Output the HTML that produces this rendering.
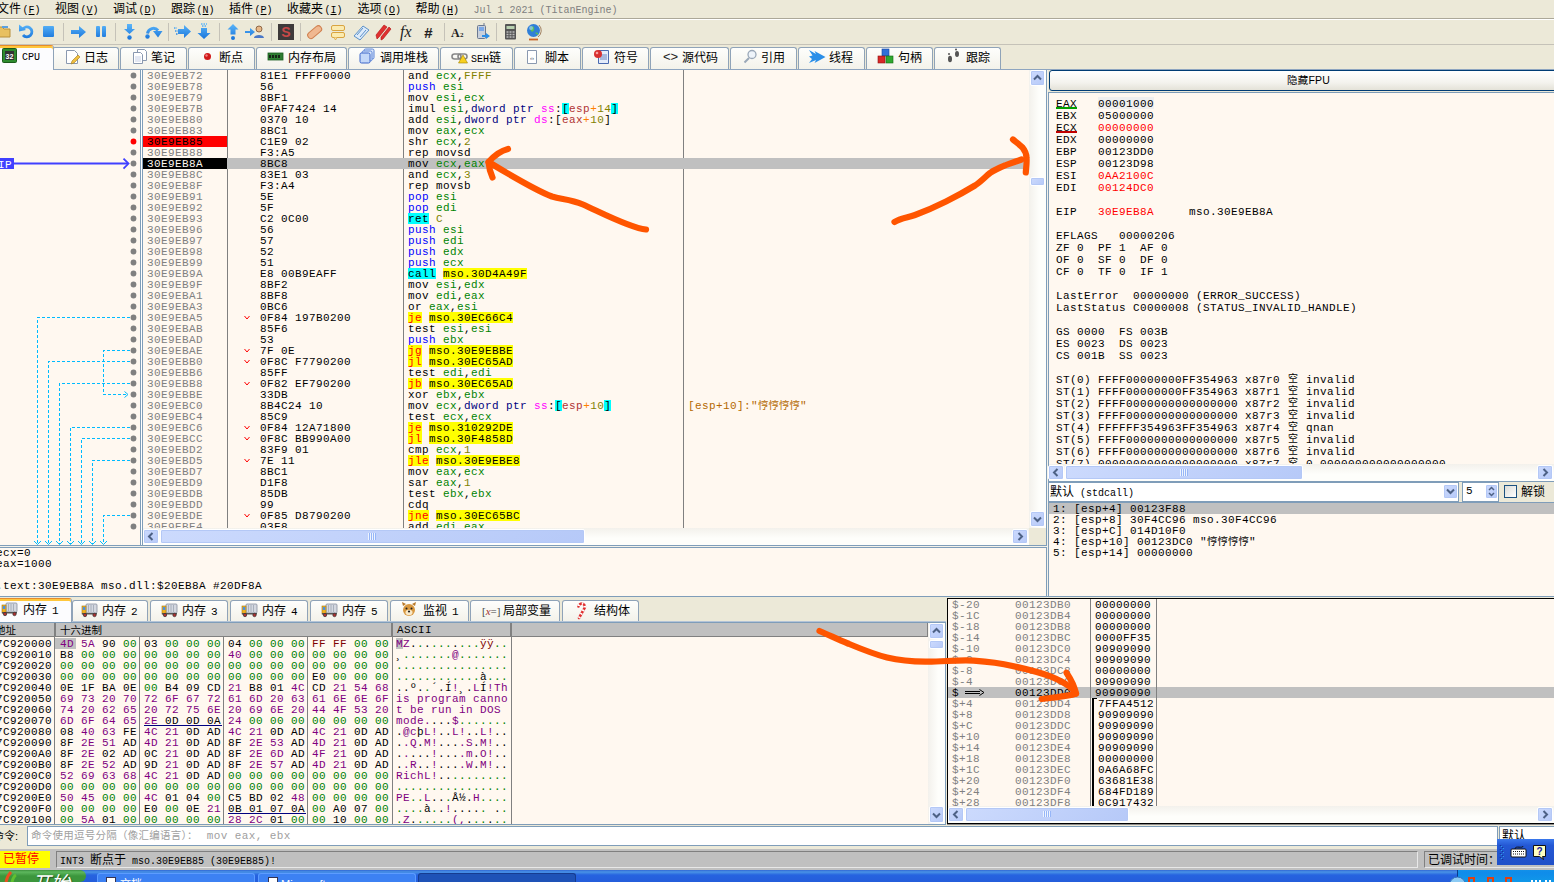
<!DOCTYPE html><html lang="zh-CN"><head><meta charset="utf-8"><title>x32dbg</title><style>
*{box-sizing:border-box;margin:0;padding:0}
html,body{width:1554px;height:882px;overflow:hidden;background:#ECE9D8}
body{position:relative;font-family:"Liberation Sans","Noto Sans CJK SC",sans-serif;font-size:12px;color:#000}
.a{position:absolute}
.m{font-family:"Liberation Mono","Noto Sans CJK SC",monospace;font-size:11px;letter-spacing:0.4px;white-space:pre;line-height:11px}
.ui{font-family:"Liberation Sans","Noto Sans CJK SC",sans-serif;font-size:12px;white-space:pre}
.l{font-family:"Liberation Mono","Noto Sans CJK SC",monospace;font-size:10px;letter-spacing:0}
.r{position:absolute;height:11px;white-space:pre;line-height:13px}
.r span{display:inline-block;height:11px;vertical-align:top}
.g{color:#808080}
.rg{color:#008300}.cn{color:#828200}.bl{color:#0000FF}.nv{color:#000080}.sg{color:#FF00FF}
.br{color:#B03434}.pl{color:#FF8000}
.cy{background:#00FFFF}.ye{background:#FFFF00}.jr{background:#FFFF00;color:#FF0000}
.cm{color:#B46800}
.tab{position:absolute;top:47px;height:22px;border:1px solid #8FA3B8;border-bottom:none;border-radius:3px 3px 0 0;background:linear-gradient(#FEFEFC,#F3F2EA)}
.tab.on{top:45px;height:25px;background:#FCFCFE;border-top:1px solid #E68B2C;box-shadow:inset 0 2px 0 #FFC73C;z-index:2}
.tl{position:absolute;white-space:pre;font-size:12px;line-height:14px}
.btn{position:absolute;background:linear-gradient(135deg,#CCDAFD,#B6C9F8);border:1px solid #FFF;border-radius:2px;box-shadow:inset 0 0 0 1px #B4C8F6}
.hd{position:absolute;background:#C0C0C0;height:14px}
</style></head><body>
<div class="a" style="left:0px;top:0px;width:1554px;height:18px;background:#ECE9D8"></div>
<div class="a" style="left:0px;top:18px;width:1554px;height:1px;background:#ACA899"></div>
<div class="a" style="left:0px;top:19px;width:1554px;height:1px;background:#FFFFFF"></div>
<div class="a ui" style="left:-3px;top:2px;line-height:15px;height:16px">文件<span class="l" style="margin-left:1.500px">(<u>F</u>)</span></div>
<div class="a ui" style="left:55px;top:2px;line-height:15px;height:16px">视图<span class="l" style="margin-left:1.500px">(<u>V</u>)</span></div>
<div class="a ui" style="left:113px;top:2px;line-height:15px;height:16px">调试<span class="l" style="margin-left:1.500px">(<u>D</u>)</span></div>
<div class="a ui" style="left:171px;top:2px;line-height:15px;height:16px">跟踪<span class="l" style="margin-left:1.500px">(<u>N</u>)</span></div>
<div class="a ui" style="left:229px;top:2px;line-height:15px;height:16px">插件<span class="l" style="margin-left:1.500px">(<u>P</u>)</span></div>
<div class="a ui" style="left:287px;top:2px;line-height:15px;height:16px">收藏夹<span class="l" style="margin-left:1.500px">(<u>I</u>)</span></div>
<div class="a ui" style="left:357.5px;top:2px;line-height:15px;height:16px">选项<span class="l" style="margin-left:1.500px">(<u>O</u>)</span></div>
<div class="a ui" style="left:415.5px;top:2px;line-height:15px;height:16px">帮助<span class="l" style="margin-left:1.500px">(<u>H</u>)</span></div>
<div class="a ui l" style="left:473.500px;top:3px;line-height:15px;color:#808080;font-size:10px">Jul 1 2021 (TitanEngine)</div>
<div class="a" style="left:0px;top:20px;width:1554px;height:24px;background:#ECE9D8"></div>
<div class="a" style="left:0px;top:44px;width:1554px;height:1px;background:#C5C2B8"></div>
<div class="a" style="left:63px;top:23px;width:1px;height:18px;background:#C5C2B8"></div>
<div class="a" style="left:115px;top:23px;width:1px;height:18px;background:#C5C2B8"></div>
<div class="a" style="left:168px;top:23px;width:1px;height:18px;background:#C5C2B8"></div>
<div class="a" style="left:219px;top:23px;width:1px;height:18px;background:#C5C2B8"></div>
<div class="a" style="left:271px;top:23px;width:1px;height:18px;background:#C5C2B8"></div>
<div class="a" style="left:300px;top:23px;width:1px;height:18px;background:#C5C2B8"></div>
<div class="a" style="left:444px;top:23px;width:1px;height:18px;background:#C5C2B8"></div>
<div class="a" style="left:496px;top:23px;width:1px;height:18px;background:#C5C2B8"></div>
<svg class="a" style="left:0px;top:20px;overflow:hidden" width="560" height="24" viewBox="0 20 560 24"><defs><linearGradient id="bg1" x1="0" y1="24" x2="0" y2="40" gradientUnits="userSpaceOnUse"><stop offset="0" stop-color="#5CB6FA"/><stop offset="1" stop-color="#1470D8"/></linearGradient></defs><path d="M-6 27h8l2 2h6v8h-16z" fill="#E8C060" stroke="#B8903A" stroke-width="1"/><rect x="2" y="26" width="6" height="2" fill="#5AA0E0"/><path d="M22.500 29.500a5 5 0 1 1 0.500 5.500" fill="none" stroke="url(#bg1)" stroke-width="2.800"/><path d="M19 24.500l0 7l7 -1.500z" fill="url(#bg1)"/><rect x="43" y="26" width="11" height="11" rx="1" fill="url(#bg1)"/><path d="M71 30h8v-4l7 6l-7 6v-4h-8z" fill="url(#bg1)"/><rect x="96" y="26" width="4" height="11" rx="1" fill="url(#bg1)"/><rect x="102" y="26" width="4" height="11" rx="1" fill="url(#bg1)"/><path d="M127 24h5v5h3l-5.500 5l-5.500 -5h3z" fill="url(#bg1)"/><circle cx="129.500" cy="37.500" r="2.200" fill="url(#bg1)"/><path d="M147.500 33.500a6 6 0 0 1 10.500 -3" fill="none" stroke="url(#bg1)" stroke-width="3"/><path d="M153 31h9.500l-4.500 6.500z" fill="url(#bg1)"/><circle cx="147.500" cy="36.500" r="2.200" fill="url(#bg1)"/><path d="M178 29h6v-4l7 6.500l-7 6.500v-4h-6z" fill="url(#bg1)"/><path d="M174 28h3M175 31h3M176 34h2" stroke="url(#bg1)" stroke-width="1.500" stroke-dasharray="1.500 1"/><path d="M201 28h6v5h3.500l-6.500 6l-6.500 -6h3.500z" fill="url(#bg1)"/><path d="M201 24h6M202 26h5" stroke="url(#bg1)" stroke-width="1.300" stroke-dasharray="1.500 1"/><path d="M233 24l5.500 5.500h-3v5h-5v-5h-3z" fill="url(#bg1)"/><circle cx="233" cy="38" r="2" fill="url(#bg1)"/><path d="M245 31h5v-3l5 4l-5 4v-3h-5z" fill="url(#bg1)"/><circle cx="259" cy="29" r="3" fill="#E8B888" stroke="#7A5030" stroke-width=".8"/><path d="M254 38c0-4 10-4 10 0z" fill="#4A78C8"/><rect x="278" y="24" width="16" height="16" fill="#3E3A3A"/><text x="286" y="37" font-family="Liberation Sans,sans-serif" font-weight="bold" font-size="14" fill="#C84848" text-anchor="middle">S</text><rect x="-8" y="-3" width="16" height="6.500" rx="3" transform="translate(314.500 32) rotate(-40)" fill="#F0B890" stroke="#D08050" stroke-width="1"/><rect x="331.500" y="25.500" width="13" height="5" rx="1.500" fill="#FBEBB0" stroke="#D9A441"/><rect x="331.500" y="32.500" width="13" height="5" rx="1.500" fill="#FBEBB0" stroke="#D9A441"/><path d="M334 37.500l1.500 2.500l1.500 -2.500" fill="#FBEBB0" stroke="#D9A441" stroke-width=".8"/><path d="M354 36l9 -10l6 4l-9 10z" fill="#DDEBFA" stroke="#5B90C8" stroke-width="1"/><path d="M357 35l6 -7M360 37l6 -7" stroke="#5B90C8" stroke-width="1"/><path d="M376 35l8 -10l3 2l-8 10l-2 2zM381 37l8 -10l2 2l-8 10l-2 1z" fill="#E03030" stroke="#B01010" stroke-width=".6"/><text x="400" y="37" font-family="Liberation Serif,serif" font-style="italic" font-size="16" fill="#222">fx</text><text x="424" y="38" font-family="Liberation Sans,sans-serif" font-style="italic" font-weight="bold" font-size="15" fill="#222">#</text><text x="451" y="37" font-family="Liberation Serif,serif" font-weight="bold" font-size="12" fill="#222">A</text><text x="460" y="37" font-family="Liberation Serif,serif" font-weight="bold" font-size="7" fill="#222">2</text><rect x="477.500" y="25.500" width="8" height="13" rx="1" fill="#C8D0DC" stroke="#6A7890" stroke-width="1"/><rect x="479" y="27" width="5" height="4" fill="#7AA8E8"/><path d="M482 35h4v-2l4 3l-4 3v-2h-4z" fill="#2B8FE8"/><path d="M484 25v-2" stroke="#6A7890"/><rect x="505" y="24" width="11" height="15.500" rx="1" fill="#555"/><rect x="506.500" y="26" width="8" height="3" fill="#B8D0B0"/><path d="M506.500 32h8M506.500 34.500h8M506.500 37h8" stroke="#BBB" stroke-width="1.500" stroke-dasharray="2 1"/><circle cx="533.500" cy="30.500" r="6.500" fill="#2F7FD8"/><path d="M530 27c3-2 5 0 4 3s-4 2-4-3zM535 33c2-1 4 0 3 2z" fill="#5AC05A"/><path d="M529 39.500h9" stroke="#C86428" stroke-width="1.800"/><circle cx="531" cy="28" r="2" fill="#9CCBFA" opacity=".7"/><path d="M539 25a8 8 0 0 1 -1 12" fill="none" stroke="#A08060" stroke-width="1"/></svg>
<div class="a" style="left:0px;top:45px;width:1554px;height:25px;background:#ECE9D8"></div>
<div class="a" style="left:0px;top:69px;width:1554px;height:1px;background:#8EA5C0"></div>
<div class="tab" style="left:52px;width:67px"><div class="tl" style="left:31px;top:3px">日志</div></div>
<div class="tab" style="left:120px;width:67px"><div class="tl" style="left:30px;top:3px">笔记</div></div>
<div class="tab" style="left:188px;width:67px"><div class="tl" style="left:30px;top:3px">断点</div></div>
<div class="tab" style="left:256px;width:91px"><div class="tl" style="left:31px;top:3px">内存布局</div></div>
<div class="tab" style="left:348px;width:91px"><div class="tl" style="left:31px;top:3px">调用堆栈</div></div>
<div class="tab" style="left:440px;width:73px"><div class="tl" style="left:30px;top:3px"><span class="l" style="font-size:10px">SEH</span>链</div></div>
<div class="tab" style="left:514px;width:67px"><div class="tl" style="left:30px;top:3px">脚本</div></div>
<div class="tab" style="left:582px;width:67px"><div class="tl" style="left:31px;top:3px">符号</div></div>
<div class="tab" style="left:650px;width:79px"><div class="tl" style="left:31px;top:3px">源代码</div></div>
<div class="tab" style="left:730px;width:67px"><div class="tl" style="left:30px;top:3px">引用</div></div>
<div class="tab" style="left:798px;width:67px"><div class="tl" style="left:30px;top:3px">线程</div></div>
<div class="tab" style="left:866px;width:67px"><div class="tl" style="left:31px;top:3px">句柄</div></div>
<div class="tab" style="left:934px;width:67px"><div class="tl" style="left:31px;top:3px">跟踪</div></div>
<div class="tab on" style="left:-2px;width:56px"><div class="tl" style="left:23px;top:3px"><span class="l" style="font-size:10px">CPU</span></div></div>
<svg class="a" style="left:0px;top:45px;z-index:3" width="1000" height="25" viewBox="0 45 1000 25"><rect x="2.500" y="48.500" width="14" height="14" rx="1" fill="#2E8B2E" stroke="#1A5A1A"/><rect x="5" y="51" width="9" height="9" fill="#333"/><text x="9.500" y="58.500" font-size="7" font-family="Liberation Sans,sans-serif" font-weight="bold" fill="#FFF" text-anchor="middle">32</text><path d="M66.500 50.500h8l3 3v10h-11z" fill="#FFF" stroke="#8A99B0"/><path d="M71 64l1 -3l6 -6l2 2l-6 6z" fill="#F0C040" stroke="#A07820" stroke-width=".6"/><path d="M137.500 49.500h7l2 2v9h-9z" fill="#FFF" stroke="#8A99B0"/><path d="M133.500 52.500h7l2 2v9h-9z" fill="#FFF" stroke="#8A99B0"/><path d="M135 57h6M135 59h6M135 61h6" stroke="#B8C4E0" stroke-width=".8"/><circle cx="207.500" cy="56.500" r="3.500" fill="#D01818"/><circle cx="206.500" cy="55.500" r="1.200" fill="#F08080"/><rect x="268" y="53" width="15" height="7" fill="#2E7D32" stroke="#1B5E20" stroke-width=".8"/><path d="M270 55v3M273 55v3M276 55v3M279 55v3" stroke="#111" stroke-width="1.600"/><rect x="364" y="49" width="10" height="10" rx="1.500" fill="#DCE8FA" stroke="#5B84D8"/><rect x="362" y="51" width="10" height="10" rx="1.500" fill="#DCE8FA" stroke="#5B84D8"/><rect x="360" y="53" width="10" height="10" rx="1.500" fill="#C4D8F8" stroke="#3B64C8"/><rect x="452" y="54" width="9" height="5" rx="2.500" fill="none" stroke="#888" stroke-width="1.600"/><rect x="458" y="54" width="9" height="5" rx="2.500" fill="none" stroke="#888" stroke-width="1.600"/><path d="M463 55l4.500 8h-9z" fill="#F8D020" stroke="#A08000" stroke-width=".6"/><path d="M527.500 50.500h9v13h-9z" fill="#FFF" stroke="#8A99B0"/><text x="532" y="60" font-size="6" font-family="Liberation Sans,sans-serif" fill="#345" text-anchor="middle">‹›</text><path d="M598.500 50.500h10v13h-10z" fill="#E4ECFA" stroke="#4A6AB0"/><path d="M600 55h7M600 57h7M600 59h7" stroke="#4A6AB0" stroke-width=".8"/><circle cx="598" cy="54" r="4" fill="#D83030"/><circle cx="597" cy="53" r="1.300" fill="#F8A0A0"/><text x="663" y="61" font-size="13" font-family="Liberation Sans,sans-serif" fill="#222">&lt;&gt;</text><circle cx="752" cy="54.500" r="4" fill="#EEF4FA" stroke="#9AA8B8" stroke-width="1.300"/><path d="M749 58l-4.500 4.500" stroke="#9AA8B8" stroke-width="2"/><path d="M809 50l7 4l-1.500 -3l11 6l-11 6l1.500 -3l-7 3l3 -4l-3 -2.500l3.500 -1z" fill="#2B8FE8"/><rect x="882" y="49" width="7" height="7" fill="#3070D8" stroke="#1848A0" stroke-width=".6"/><rect x="878" y="56" width="7" height="7" fill="#D82828" stroke="#901010" stroke-width=".6"/><rect x="886" y="56" width="7" height="7" fill="#30A830" stroke="#106810" stroke-width=".6"/><ellipse cx="950" cy="59" rx="2" ry="3.200" fill="#555"/><ellipse cx="957" cy="54" rx="2" ry="3" fill="#555"/><circle cx="949" cy="54" r="1" fill="#555"/><circle cx="956" cy="49.500" r="1" fill="#555"/></svg>
<div class="a" style="left:0px;top:70px;width:1046px;height:475px;background:#FFF8F0"></div>
<div class="a" style="left:140px;top:70px;width:1px;height:475px;background:#7F9DB9"></div>
<div class="a" style="left:141px;top:70px;width:1px;height:475px;background:#FFFFFF"></div>
<div class="a" style="left:142px;top:70px;width:1px;height:475px;background:#7F9DB9"></div>
<div class="a" style="left:227px;top:70px;width:1px;height:458px;background:#808080"></div>
<div class="a" style="left:403px;top:70px;width:1px;height:458px;background:#808080"></div>
<div class="a" style="left:683px;top:70px;width:1px;height:458px;background:#808080"></div>
<div class="a" style="left:143px;top:158px;width:886px;height:11px;background:#C0C0C0"></div>
<div class="a m" style="left:0;top:70px;width:1029px;height:458px;overflow:hidden"><div class="r" style="left:143px;top:0px;width:84px;padding-left:4px;"><span class="g">30E9EB72</span></div><div class="r" style="left:260px;top:0px">81E1 FFFF0000</div><div class="r" style="left:408px;top:0px">and <span class="rg">ecx</span>,<span class="cn">FFFF</span></div><div class="r" style="left:143px;top:11px;width:84px;padding-left:4px;"><span class="g">30E9EB78</span></div><div class="r" style="left:260px;top:11px">56</div><div class="r" style="left:408px;top:11px"><span class="bl">push </span><span class="rg">esi</span></div><div class="r" style="left:143px;top:22px;width:84px;padding-left:4px;"><span class="g">30E9EB79</span></div><div class="r" style="left:260px;top:22px">8BF1</div><div class="r" style="left:408px;top:22px">mov <span class="rg">esi</span>,<span class="rg">ecx</span></div><div class="r" style="left:143px;top:33px;width:84px;padding-left:4px;"><span class="g">30E9EB7B</span></div><div class="r" style="left:260px;top:33px">0FAF7424 14</div><div class="r" style="left:408px;top:33px">imul <span class="rg">esi</span>,<span class="nv">dword ptr </span><span class="sg">ss</span>:<span class="cy">[</span><span class="br">esp</span><span class="pl">+</span><span class="cn">14</span><span class="cy">]</span></div><div class="r" style="left:143px;top:44px;width:84px;padding-left:4px;"><span class="g">30E9EB80</span></div><div class="r" style="left:260px;top:44px">0370 10</div><div class="r" style="left:408px;top:44px">add <span class="rg">esi</span>,<span class="nv">dword ptr </span><span class="sg">ds</span>:[<span class="br">eax</span><span class="pl">+</span><span class="cn">10</span>]</div><div class="r" style="left:143px;top:55px;width:84px;padding-left:4px;"><span class="g">30E9EB83</span></div><div class="r" style="left:260px;top:55px">8BC1</div><div class="r" style="left:408px;top:55px">mov <span class="rg">eax</span>,<span class="rg">ecx</span></div><div class="r" style="left:143px;top:66px;width:84px;padding-left:4px;background:#FF0000;color:#000;"><span class="">30E9EB85</span></div><div class="r" style="left:260px;top:66px">C1E9 02</div><div class="r" style="left:408px;top:66px">shr <span class="rg">ecx</span>,<span class="cn">2</span></div><div class="r" style="left:143px;top:77px;width:84px;padding-left:4px;"><span class="g">30E9EB88</span></div><div class="r" style="left:260px;top:77px">F3:A5</div><div class="r" style="left:408px;top:77px">rep movsd</div><div class="r" style="left:143px;top:88px;width:84px;padding-left:4px;background:#000000;color:#FFF8F0;"><span class="">30E9EB8A</span></div><div class="r" style="left:260px;top:88px">8BC8</div><div class="r" style="left:408px;top:88px">mov <span class="rg">ecx</span>,<span class="rg">eax</span></div><div class="r" style="left:143px;top:99px;width:84px;padding-left:4px;"><span class="g">30E9EB8C</span></div><div class="r" style="left:260px;top:99px">83E1 03</div><div class="r" style="left:408px;top:99px">and <span class="rg">ecx</span>,<span class="cn">3</span></div><div class="r" style="left:143px;top:110px;width:84px;padding-left:4px;"><span class="g">30E9EB8F</span></div><div class="r" style="left:260px;top:110px">F3:A4</div><div class="r" style="left:408px;top:110px">rep movsb</div><div class="r" style="left:143px;top:121px;width:84px;padding-left:4px;"><span class="g">30E9EB91</span></div><div class="r" style="left:260px;top:121px">5E</div><div class="r" style="left:408px;top:121px"><span class="bl">pop </span><span class="rg">esi</span></div><div class="r" style="left:143px;top:132px;width:84px;padding-left:4px;"><span class="g">30E9EB92</span></div><div class="r" style="left:260px;top:132px">5F</div><div class="r" style="left:408px;top:132px"><span class="bl">pop </span><span class="rg">edi</span></div><div class="r" style="left:143px;top:143px;width:84px;padding-left:4px;"><span class="g">30E9EB93</span></div><div class="r" style="left:260px;top:143px">C2 0C00</div><div class="r" style="left:408px;top:143px"><span class="cy">ret</span> <span class="cn">C</span></div><div class="r" style="left:143px;top:154px;width:84px;padding-left:4px;"><span class="g">30E9EB96</span></div><div class="r" style="left:260px;top:154px">56</div><div class="r" style="left:408px;top:154px"><span class="bl">push </span><span class="rg">esi</span></div><div class="r" style="left:143px;top:165px;width:84px;padding-left:4px;"><span class="g">30E9EB97</span></div><div class="r" style="left:260px;top:165px">57</div><div class="r" style="left:408px;top:165px"><span class="bl">push </span><span class="rg">edi</span></div><div class="r" style="left:143px;top:176px;width:84px;padding-left:4px;"><span class="g">30E9EB98</span></div><div class="r" style="left:260px;top:176px">52</div><div class="r" style="left:408px;top:176px"><span class="bl">push </span><span class="rg">edx</span></div><div class="r" style="left:143px;top:187px;width:84px;padding-left:4px;"><span class="g">30E9EB99</span></div><div class="r" style="left:260px;top:187px">51</div><div class="r" style="left:408px;top:187px"><span class="bl">push </span><span class="rg">ecx</span></div><div class="r" style="left:143px;top:198px;width:84px;padding-left:4px;"><span class="g">30E9EB9A</span></div><div class="r" style="left:260px;top:198px">E8 00B9EAFF</div><div class="r" style="left:408px;top:198px"><span class="cy">call</span> <span class="ye">mso.30D4A49F</span></div><div class="r" style="left:143px;top:209px;width:84px;padding-left:4px;"><span class="g">30E9EB9F</span></div><div class="r" style="left:260px;top:209px">8BF2</div><div class="r" style="left:408px;top:209px">mov <span class="rg">esi</span>,<span class="rg">edx</span></div><div class="r" style="left:143px;top:220px;width:84px;padding-left:4px;"><span class="g">30E9EBA1</span></div><div class="r" style="left:260px;top:220px">8BF8</div><div class="r" style="left:408px;top:220px">mov <span class="rg">edi</span>,<span class="rg">eax</span></div><div class="r" style="left:143px;top:231px;width:84px;padding-left:4px;"><span class="g">30E9EBA3</span></div><div class="r" style="left:260px;top:231px">0BC6</div><div class="r" style="left:408px;top:231px">or <span class="rg">eax</span>,<span class="rg">esi</span></div><div class="r" style="left:143px;top:242px;width:84px;padding-left:4px;"><span class="g">30E9EBA5</span></div><div class="r" style="left:260px;top:242px">0F84 197B0200</div><div class="r" style="left:408px;top:242px"><span class="jr">je</span> <span class="ye">mso.30EC66C4</span></div><div class="r" style="left:143px;top:253px;width:84px;padding-left:4px;"><span class="g">30E9EBAB</span></div><div class="r" style="left:260px;top:253px">85F6</div><div class="r" style="left:408px;top:253px">test <span class="rg">esi</span>,<span class="rg">esi</span></div><div class="r" style="left:143px;top:264px;width:84px;padding-left:4px;"><span class="g">30E9EBAD</span></div><div class="r" style="left:260px;top:264px">53</div><div class="r" style="left:408px;top:264px"><span class="bl">push </span><span class="rg">ebx</span></div><div class="r" style="left:143px;top:275px;width:84px;padding-left:4px;"><span class="g">30E9EBAE</span></div><div class="r" style="left:260px;top:275px">7F 0E</div><div class="r" style="left:408px;top:275px"><span class="jr">jg</span> <span class="ye">mso.30E9EBBE</span></div><div class="r" style="left:143px;top:286px;width:84px;padding-left:4px;"><span class="g">30E9EBB0</span></div><div class="r" style="left:260px;top:286px">0F8C F7790200</div><div class="r" style="left:408px;top:286px"><span class="jr">jl</span> <span class="ye">mso.30EC65AD</span></div><div class="r" style="left:143px;top:297px;width:84px;padding-left:4px;"><span class="g">30E9EBB6</span></div><div class="r" style="left:260px;top:297px">85FF</div><div class="r" style="left:408px;top:297px">test <span class="rg">edi</span>,<span class="rg">edi</span></div><div class="r" style="left:143px;top:308px;width:84px;padding-left:4px;"><span class="g">30E9EBB8</span></div><div class="r" style="left:260px;top:308px">0F82 EF790200</div><div class="r" style="left:408px;top:308px"><span class="jr">jb</span> <span class="ye">mso.30EC65AD</span></div><div class="r" style="left:143px;top:319px;width:84px;padding-left:4px;"><span class="g">30E9EBBE</span></div><div class="r" style="left:260px;top:319px">33DB</div><div class="r" style="left:408px;top:319px">xor <span class="rg">ebx</span>,<span class="rg">ebx</span></div><div class="r" style="left:143px;top:330px;width:84px;padding-left:4px;"><span class="g">30E9EBC0</span></div><div class="r" style="left:260px;top:330px">8B4C24 10</div><div class="r" style="left:408px;top:330px">mov <span class="rg">ecx</span>,<span class="nv">dword ptr </span><span class="sg">ss</span>:<span class="cy">[</span><span class="br">esp</span><span class="pl">+</span><span class="cn">10</span><span class="cy">]</span></div><div class="r cm" style="left:688px;top:330px">[esp+10]:"<span style="letter-spacing:0;font-size:10.500px">悙悙悙悙</span>"</div><div class="r" style="left:143px;top:341px;width:84px;padding-left:4px;"><span class="g">30E9EBC4</span></div><div class="r" style="left:260px;top:341px">85C9</div><div class="r" style="left:408px;top:341px">test <span class="rg">ecx</span>,<span class="rg">ecx</span></div><div class="r" style="left:143px;top:352px;width:84px;padding-left:4px;"><span class="g">30E9EBC6</span></div><div class="r" style="left:260px;top:352px">0F84 12A71800</div><div class="r" style="left:408px;top:352px"><span class="jr">je</span> <span class="ye">mso.310292DE</span></div><div class="r" style="left:143px;top:363px;width:84px;padding-left:4px;"><span class="g">30E9EBCC</span></div><div class="r" style="left:260px;top:363px">0F8C BB990A00</div><div class="r" style="left:408px;top:363px"><span class="jr">jl</span> <span class="ye">mso.30F4858D</span></div><div class="r" style="left:143px;top:374px;width:84px;padding-left:4px;"><span class="g">30E9EBD2</span></div><div class="r" style="left:260px;top:374px">83F9 01</div><div class="r" style="left:408px;top:374px">cmp <span class="rg">ecx</span>,<span class="cn">1</span></div><div class="r" style="left:143px;top:385px;width:84px;padding-left:4px;"><span class="g">30E9EBD5</span></div><div class="r" style="left:260px;top:385px">7E 11</div><div class="r" style="left:408px;top:385px"><span class="jr">jle</span> <span class="ye">mso.30E9EBE8</span></div><div class="r" style="left:143px;top:396px;width:84px;padding-left:4px;"><span class="g">30E9EBD7</span></div><div class="r" style="left:260px;top:396px">8BC1</div><div class="r" style="left:408px;top:396px">mov <span class="rg">eax</span>,<span class="rg">ecx</span></div><div class="r" style="left:143px;top:407px;width:84px;padding-left:4px;"><span class="g">30E9EBD9</span></div><div class="r" style="left:260px;top:407px">D1F8</div><div class="r" style="left:408px;top:407px">sar <span class="rg">eax</span>,<span class="cn">1</span></div><div class="r" style="left:143px;top:418px;width:84px;padding-left:4px;"><span class="g">30E9EBDB</span></div><div class="r" style="left:260px;top:418px">85DB</div><div class="r" style="left:408px;top:418px">test <span class="rg">ebx</span>,<span class="rg">ebx</span></div><div class="r" style="left:143px;top:429px;width:84px;padding-left:4px;"><span class="g">30E9EBDD</span></div><div class="r" style="left:260px;top:429px">99</div><div class="r" style="left:408px;top:429px">cdq</div><div class="r" style="left:143px;top:440px;width:84px;padding-left:4px;"><span class="g">30E9EBDE</span></div><div class="r" style="left:260px;top:440px">0F85 D8790200</div><div class="r" style="left:408px;top:440px"><span class="jr">jne</span> <span class="ye">mso.30EC65BC</span></div><div class="r" style="left:143px;top:451px;width:84px;padding-left:4px;"><span class="g">30E9EBE4</span></div><div class="r" style="left:260px;top:451px">03F8</div><div class="r" style="left:408px;top:451px">add <span class="rg">edi</span>,<span class="rg">eax</span></div></div>
<svg class="a" style="left:0px;top:70px;" width="260" height="476" viewBox="0 70 260 476"><circle cx="133.500" cy="75.5" r="2.900" fill="#808080"/><circle cx="133.500" cy="86.5" r="2.900" fill="#808080"/><circle cx="133.500" cy="97.5" r="2.900" fill="#808080"/><circle cx="133.500" cy="108.5" r="2.900" fill="#808080"/><circle cx="133.500" cy="119.5" r="2.900" fill="#808080"/><circle cx="133.500" cy="130.5" r="2.900" fill="#808080"/><circle cx="133.500" cy="141.5" r="2.900" fill="#FF0000"/><circle cx="133.500" cy="152.5" r="2.900" fill="#808080"/><circle cx="133.500" cy="163.5" r="2.900" fill="#808080"/><circle cx="133.500" cy="174.5" r="2.900" fill="#808080"/><circle cx="133.500" cy="185.5" r="2.900" fill="#808080"/><circle cx="133.500" cy="196.5" r="2.900" fill="#808080"/><circle cx="133.500" cy="207.5" r="2.900" fill="#808080"/><circle cx="133.500" cy="218.5" r="2.900" fill="#808080"/><circle cx="133.500" cy="229.5" r="2.900" fill="#808080"/><circle cx="133.500" cy="240.5" r="2.900" fill="#808080"/><circle cx="133.500" cy="251.5" r="2.900" fill="#808080"/><circle cx="133.500" cy="262.5" r="2.900" fill="#808080"/><circle cx="133.500" cy="273.5" r="2.900" fill="#808080"/><circle cx="133.500" cy="284.5" r="2.900" fill="#808080"/><circle cx="133.500" cy="295.5" r="2.900" fill="#808080"/><circle cx="133.500" cy="306.5" r="2.900" fill="#808080"/><circle cx="133.500" cy="317.5" r="2.900" fill="#808080"/><circle cx="133.500" cy="328.5" r="2.900" fill="#808080"/><circle cx="133.500" cy="339.5" r="2.900" fill="#808080"/><circle cx="133.500" cy="350.5" r="2.900" fill="#808080"/><circle cx="133.500" cy="361.5" r="2.900" fill="#808080"/><circle cx="133.500" cy="372.5" r="2.900" fill="#808080"/><circle cx="133.500" cy="383.5" r="2.900" fill="#808080"/><circle cx="133.500" cy="394.5" r="2.900" fill="#808080"/><circle cx="133.500" cy="405.5" r="2.900" fill="#808080"/><circle cx="133.500" cy="416.5" r="2.900" fill="#808080"/><circle cx="133.500" cy="427.5" r="2.900" fill="#808080"/><circle cx="133.500" cy="438.5" r="2.900" fill="#808080"/><circle cx="133.500" cy="449.5" r="2.900" fill="#808080"/><circle cx="133.500" cy="460.5" r="2.900" fill="#808080"/><circle cx="133.500" cy="471.5" r="2.900" fill="#808080"/><circle cx="133.500" cy="482.5" r="2.900" fill="#808080"/><circle cx="133.500" cy="493.5" r="2.900" fill="#808080"/><circle cx="133.500" cy="504.5" r="2.900" fill="#808080"/><circle cx="133.500" cy="515.5" r="2.900" fill="#808080"/><circle cx="133.500" cy="526.5" r="2.900" fill="#808080"/><path d="M130 317.5H37.5V544M130 361.5H48.5V544M130 383.5H59.5V544M130 427.5H70.5V544M130 438.5H81.5V544M130 460.5H92.5V544M130 515.5H103.5V544M130 350.5H103.5V394.5H126" fill="none" stroke="#00BBFF" stroke-width="1" stroke-dasharray="3 2" shape-rendering="crispEdges"/><path d="M34 541l3.500 3.500l3.500 -3.500M45 541l3.500 3.500l3.500 -3.500M56 541l3.500 3.500l3.500 -3.500M67 541l3.500 3.500l3.500 -3.500M78 541l3.500 3.500l3.500 -3.500M89 541l3.500 3.500l3.500 -3.500M100 541l3.500 3.500l3.500 -3.500M124.500 391.5l3.500 3l-3.500 3" fill="none" stroke="#00BBFF" stroke-width="1"/><path d="M244.500 316.0l2.500 3l2.500 -3M244.500 349.0l2.500 3l2.500 -3M244.500 360.0l2.500 3l2.500 -3M244.500 382.0l2.500 3l2.500 -3M244.500 426.0l2.500 3l2.500 -3M244.500 437.0l2.500 3l2.500 -3M244.500 459.0l2.500 3l2.500 -3M244.500 514.0l2.500 3l2.500 -3" fill="none" stroke="#FF0000" stroke-width="1"/><rect x="-10" y="158" width="24" height="11" fill="#4040FF"/><text x="-9" y="167.500" font-family="Liberation Mono,monospace" font-size="11" fill="#FFF" style="letter-spacing:.4px">EIP</text><path d="M14 163.600H128" stroke="#4040FF" stroke-width="2"/><path d="M123.500 158.600l5 5l-5 5" fill="none" stroke="#4040FF" stroke-width="1.800"/></svg>
<div class="a" style="left:143px;top:528px;width:903px;height:18px;background:#ECE9D8"></div>
<div class="a" style="left:143px;top:528px;width:886px;height:17px;background:linear-gradient(#F3F1EC,#FEFEFB 60%)"></div>
<div class="btn" style="left:143px;top:529px;width:16px;height:15px;"></div>
<div class="btn" style="left:1012px;top:529px;width:16px;height:15px;"></div>
<div class="btn" style="left:160px;top:529px;width:425px;height:15px;"></div>
<svg class="a" style="left:144px;top:530px;" width="14" height="14" viewBox="0 0 14 14"><path d="M8.500 3l-3.500 3.500l3.500 3.500" fill="none" stroke="#4D6185" stroke-width="2"/></svg>
<svg class="a" style="left:1013px;top:530px;" width="14" height="14" viewBox="0 0 14 14"><path d="M5.500 3l3.500 3.500l-3.500 3.500" fill="none" stroke="#4D6185" stroke-width="2"/></svg>
<svg class="a" style="left:367px;top:533px;" width="10" height="7" viewBox="0 0 10 7"><path d="M1.500 0v7M3.500 0v7M5.500 0v7M7.500 0v7" stroke="#EEF4FE" stroke-width="1"/><path d="M2.500 0v7M4.500 0v7M6.500 0v7M8.500 0v7" stroke="#8CB0F8" stroke-width="1" opacity=".8"/></svg>
<div class="a" style="left:1029px;top:70px;width:17px;height:458px;background:linear-gradient(to right,#F3F1EC,#FEFEFB 60%)"></div>
<div class="btn" style="left:1030px;top:70px;width:15px;height:16px;"></div>
<div class="btn" style="left:1030px;top:511px;width:15px;height:16px;"></div>
<div class="btn" style="left:1030px;top:177px;width:15px;height:9px;"></div>
<svg class="a" style="left:1031px;top:71px;" width="14" height="14" viewBox="0 0 14 14"><path d="M3 8.500l3.500 -3.500l3.500 3.500" fill="none" stroke="#4D6185" stroke-width="2"/></svg>
<svg class="a" style="left:1031px;top:512px;" width="14" height="14" viewBox="0 0 14 14"><path d="M3 5.500l3.500 3.500l3.500 -3.500" fill="none" stroke="#4D6185" stroke-width="2"/></svg>
<div class="a" style="left:0px;top:545px;width:1047px;height:1px;background:#7F9DB9"></div>
<div class="a" style="left:1046px;top:70px;width:1px;height:476px;background:#7F9DB9"></div>
<div class="a" style="left:0px;top:546px;width:1048px;height:1px;background:#F4F2EA"></div>
<div class="a" style="left:1047px;top:70px;width:1px;height:530px;background:#F4F2EA"></div>
<div class="a" style="left:0px;top:547px;width:1047px;height:50px;background:#FFF8F0"></div>
<div class="a" style="left:0px;top:547px;width:1047px;height:1px;background:#7F9DB9"></div>
<div class="a" style="left:0px;top:596px;width:1554px;height:1px;background:#7F9DB9"></div>
<div class="a" style="left:1046px;top:547px;width:1px;height:50px;background:#7F9DB9"></div>
<div class="a m" style="left:-4px;top:548px">ecx=0</div>
<div class="a m" style="left:-4px;top:559px">eax=1000</div>
<div class="a m" style="left:-4px;top:581px">.text:30E9EB8A mso.dll:$20EB8A #20DF8A</div>
<div class="a" style="left:1049px;top:70px;width:520px;height:21px;background:linear-gradient(#FFFFFF,#F4F3EE 60%,#E4E2D8);border:1px solid #003C74;border-radius:3px"></div>
<div class="a ui" style="left:1287px;top:73px;font-size:10.500px;line-height:15px;letter-spacing:.2px">隐藏FPU</div>
<div class="a" style="left:1048px;top:92px;width:520px;height:390px;background:#FFF8F0;border:1px solid #7F9DB9"></div>
<div class="a m" style="left:1048px;top:93px;width:506px;height:371px;overflow:hidden"><div class="r" style="left:8px;top:4px;height:12px;line-height:14px"><span style="border-bottom:2px solid #00A000;height:12px">EAX</span>   <span style="background:#EFEFEF;height:12px">00001000</span></div><div class="r" style="left:8px;top:16px;height:12px;line-height:14px">EBX   05000000</div><div class="r" style="left:8px;top:28px;height:12px;line-height:14px"><span style="border-bottom:2px solid #C00000;height:12px">ECX</span>   <span style="color:#FF0000">00000000</span></div><div class="r" style="left:8px;top:40px;height:12px;line-height:14px">EDX   00000000</div><div class="r" style="left:8px;top:52px;height:12px;line-height:14px">EBP   00123DD0</div><div class="r" style="left:8px;top:64px;height:12px;line-height:14px">ESP   00123D98</div><div class="r" style="left:8px;top:76px;height:12px;line-height:14px">ESI   <span style="color:#FF0000">0AA2100C</span></div><div class="r" style="left:8px;top:88px;height:12px;line-height:14px">EDI   <span style="color:#FF0000">00124DC0</span></div><div class="r" style="left:8px;top:112px;height:12px;line-height:14px">EIP   <span style="color:#FF0000">30E9EB8A</span>     mso.30E9EB8A</div><div class="r" style="left:8px;top:136px;height:12px;line-height:14px">EFLAGS   00000206</div><div class="r" style="left:8px;top:148px;height:12px;line-height:14px">ZF 0  PF 1  AF 0</div><div class="r" style="left:8px;top:160px;height:12px;line-height:14px">OF 0  SF 0  DF 0</div><div class="r" style="left:8px;top:172px;height:12px;line-height:14px">CF 0  TF 0  IF 1</div><div class="r" style="left:8px;top:196px;height:12px;line-height:14px">LastError  00000000 (ERROR_SUCCESS)</div><div class="r" style="left:8px;top:208px;height:12px;line-height:14px">LastStatus C0000008 (STATUS_INVALID_HANDLE)</div><div class="r" style="left:8px;top:232px;height:12px;line-height:14px">GS 0000  FS 003B</div><div class="r" style="left:8px;top:244px;height:12px;line-height:14px">ES 0023  DS 0023</div><div class="r" style="left:8px;top:256px;height:12px;line-height:14px">CS 001B  SS 0023</div><div class="r" style="left:8px;top:280px;height:12px;line-height:14px">ST(0) FFFF00000000FF354963 x87r0 <span style="display:inline-block;width:12px;letter-spacing:0;font-size:10px;height:12px;text-align:center">空</span> invalid</div><div class="r" style="left:8px;top:292px;height:12px;line-height:14px">ST(1) FFFF00000000FF354963 x87r1 <span style="display:inline-block;width:12px;letter-spacing:0;font-size:10px;height:12px;text-align:center">空</span> invalid</div><div class="r" style="left:8px;top:304px;height:12px;line-height:14px">ST(2) FFFF0000000000000000 x87r2 <span style="display:inline-block;width:12px;letter-spacing:0;font-size:10px;height:12px;text-align:center">空</span> invalid</div><div class="r" style="left:8px;top:316px;height:12px;line-height:14px">ST(3) FFFF0000000000000000 x87r3 <span style="display:inline-block;width:12px;letter-spacing:0;font-size:10px;height:12px;text-align:center">空</span> invalid</div><div class="r" style="left:8px;top:328px;height:12px;line-height:14px">ST(4) FFFFFF354963FF354963 x87r4 <span style="display:inline-block;width:12px;letter-spacing:0;font-size:10px;height:12px;text-align:center">空</span> qnan</div><div class="r" style="left:8px;top:340px;height:12px;line-height:14px">ST(5) FFFF0000000000000000 x87r5 <span style="display:inline-block;width:12px;letter-spacing:0;font-size:10px;height:12px;text-align:center">空</span> invalid</div><div class="r" style="left:8px;top:352px;height:12px;line-height:14px">ST(6) FFFF0000000000000000 x87r6 <span style="display:inline-block;width:12px;letter-spacing:0;font-size:10px;height:12px;text-align:center">空</span> invalid</div><div class="r" style="left:8px;top:364px;height:12px;line-height:14px">ST(7) 00000000000000000000 x87r7 <span style="display:inline-block;width:12px;letter-spacing:0;font-size:10px;height:12px;text-align:center">空</span> 0.000000000000000000</div></div>
<div class="a" style="left:1049px;top:464px;width:505px;height:17px;background:linear-gradient(#F3F1EC,#FEFEFB 60%)"></div>
<div class="btn" style="left:1048px;top:465px;width:16px;height:15px;"></div>
<div class="btn" style="left:1537px;top:465px;width:16px;height:15px;"></div>
<div class="btn" style="left:1065px;top:465px;width:238px;height:15px;"></div>
<svg class="a" style="left:1049px;top:466px;" width="14" height="14" viewBox="0 0 14 14"><path d="M8.500 3l-3.500 3.500l3.500 3.500" fill="none" stroke="#4D6185" stroke-width="2"/></svg>
<svg class="a" style="left:1538px;top:466px;" width="14" height="14" viewBox="0 0 14 14"><path d="M5.500 3l3.500 3.500l-3.500 3.500" fill="none" stroke="#4D6185" stroke-width="2"/></svg>
<svg class="a" style="left:1179px;top:469px;" width="10" height="7" viewBox="0 0 10 7"><path d="M1.500 0v7M3.500 0v7M5.500 0v7M7.500 0v7" stroke="#EEF4FE" stroke-width="1"/><path d="M2.500 0v7M4.500 0v7M6.500 0v7M8.500 0v7" stroke="#8CB0F8" stroke-width="1" opacity=".8"/></svg>
<div class="a" style="left:1048px;top:481px;width:520px;height:1px;background:#7F9DB9"></div>
<div class="a" style="left:1048px;top:482px;width:411px;height:20px;background:#FFFFFF;border:1px solid #7F9DB9"></div>
<div class="a ui" style="left:1050px;top:485px;line-height:14px">默认<span class="l"> (stdcall)</span></div>
<div class="btn" style="left:1443px;top:484px;width:15px;height:15px;"></div>
<svg class="a" style="left:1443px;top:484px;" width="15" height="15" viewBox="0 0 15 15"><path d="M4 5.500l3.500 3.500l3.500 -3.500" fill="none" stroke="#4D6185" stroke-width="2"/></svg>
<div class="a" style="left:1462px;top:482px;width:37px;height:20px;background:#FFFFFF;border:1px solid #7F9DB9"></div>
<div class="a m" style="left:1466px;top:486px">5</div>
<div class="btn" style="left:1485px;top:484px;width:13px;height:15px;"></div>
<svg class="a" style="left:1485px;top:484px;" width="13" height="15" viewBox="0 0 13 15"><path d="M4 6l2.500 -2.500l2.500 2.500M4 9l2.500 2.500l2.500 -2.500" fill="none" stroke="#4D6185" stroke-width="1.500"/></svg>
<div class="a" style="left:1504px;top:485px;width:13px;height:13px;background:linear-gradient(135deg,#DCDCD7,#FFFFFF);border:1px solid #1C5180"></div>
<div class="a ui" style="left:1521px;top:485px;line-height:14px">解锁</div>
<div class="a" style="left:1048px;top:502px;width:520px;height:95px;background:#FFF8F0;border:1px solid #7F9DB9"></div>
<div class="a" style="left:1049px;top:503px;width:505px;height:11px;background:#C0C0C0"></div>
<div class="a m" style="left:1053px;top:504px">1: [esp+4] 00123F88</div>
<div class="a m" style="left:1053px;top:515px">2: [esp+8] 30F4CC96 mso.30F4CC96</div>
<div class="a m" style="left:1053px;top:526px">3: [esp+C] 014D10F0</div>
<div class="a m" style="left:1053px;top:537px">4: [esp+10] 00123DC0 "<span style="letter-spacing:0;font-size:10.500px">悙悙悙悙</span>"</div>
<div class="a m" style="left:1053px;top:548px">5: [esp+14] 00000000</div>
<div class="a" style="left:0px;top:597px;width:946px;height:25px;background:#ECE9D8"></div>
<div class="a" style="left:0px;top:621px;width:946px;height:1px;background:#B4C4D8"></div>
<div class="tab on" style="left:-3px;width:75px;top:598px;height:24px"><div class="tl" style="left:25px;top:4px">内存<span class="l" style="font-size:11px;margin-left:-1.500px"> 1</span></div></div>
<div class="tab" style="left:72px;width:76px;top:600px;height:21px"><div class="tl" style="left:29px;top:3px">内存<span class="l" style="font-size:11px;margin-left:-1.500px"> 2</span></div></div>
<div class="tab" style="left:150px;width:78px;top:600px;height:21px"><div class="tl" style="left:31px;top:3px">内存<span class="l" style="font-size:11px;margin-left:-1.500px"> 3</span></div></div>
<div class="tab" style="left:230px;width:78px;top:600px;height:21px"><div class="tl" style="left:31px;top:3px">内存<span class="l" style="font-size:11px;margin-left:-1.500px"> 4</span></div></div>
<div class="tab" style="left:310px;width:78px;top:600px;height:21px"><div class="tl" style="left:31px;top:3px">内存<span class="l" style="font-size:11px;margin-left:-1.500px"> 5</span></div></div>
<div class="tab" style="left:390px;width:79px;top:600px;height:21px"><div class="tl" style="left:32px;top:3px">监视<span class="l" style="font-size:11px;margin-left:-1.500px"> 1</span></div></div>
<div class="tab" style="left:470px;width:90px;top:600px;height:21px"><div class="tl" style="left:32px;top:3px">局部变量</div></div>
<div class="tab" style="left:562px;width:77px;top:600px;height:21px"><div class="tl" style="left:31px;top:3px">结构体</div></div>
<svg class="a" style="left:0px;top:598px;z-index:3" width="660" height="24" viewBox="0 598 660 24"><rect x="6" y="603" width="11" height="9" rx="1" fill="#D4D8E0" stroke="#8890A0" stroke-width=".8"/><path d="M8.5 604v7M11 604v7M13.5 604v7" stroke="#A8B0BC" stroke-width="1"/><rect x="2" y="605" width="4" height="8" fill="#F0B020" stroke="#A87810" stroke-width=".6"/><rect x="2.8" y="606" width="2.400" height="3" fill="#4A90E0"/><rect x="2" y="612" width="15" height="1.500" fill="#555"/><circle cx="5" cy="614" r="1.700" fill="#B03030" stroke="#333" stroke-width=".7"/><circle cx="14.5" cy="614" r="1.700" fill="#B03030" stroke="#333" stroke-width=".7"/><rect x="86" y="604" width="11" height="9" rx="1" fill="#D4D8E0" stroke="#8890A0" stroke-width=".8"/><path d="M88.5 605v7M91 605v7M93.5 605v7" stroke="#A8B0BC" stroke-width="1"/><rect x="82" y="606" width="4" height="8" fill="#F0B020" stroke="#A87810" stroke-width=".6"/><rect x="82.8" y="607" width="2.400" height="3" fill="#4A90E0"/><rect x="82" y="613" width="15" height="1.500" fill="#555"/><circle cx="85" cy="615" r="1.700" fill="#B03030" stroke="#333" stroke-width=".7"/><circle cx="94.5" cy="615" r="1.700" fill="#B03030" stroke="#333" stroke-width=".7"/><rect x="166" y="604" width="11" height="9" rx="1" fill="#D4D8E0" stroke="#8890A0" stroke-width=".8"/><path d="M168.5 605v7M171 605v7M173.5 605v7" stroke="#A8B0BC" stroke-width="1"/><rect x="162" y="606" width="4" height="8" fill="#F0B020" stroke="#A87810" stroke-width=".6"/><rect x="162.8" y="607" width="2.400" height="3" fill="#4A90E0"/><rect x="162" y="613" width="15" height="1.500" fill="#555"/><circle cx="165" cy="615" r="1.700" fill="#B03030" stroke="#333" stroke-width=".7"/><circle cx="174.5" cy="615" r="1.700" fill="#B03030" stroke="#333" stroke-width=".7"/><rect x="246" y="604" width="11" height="9" rx="1" fill="#D4D8E0" stroke="#8890A0" stroke-width=".8"/><path d="M248.5 605v7M251 605v7M253.5 605v7" stroke="#A8B0BC" stroke-width="1"/><rect x="242" y="606" width="4" height="8" fill="#F0B020" stroke="#A87810" stroke-width=".6"/><rect x="242.8" y="607" width="2.400" height="3" fill="#4A90E0"/><rect x="242" y="613" width="15" height="1.500" fill="#555"/><circle cx="245" cy="615" r="1.700" fill="#B03030" stroke="#333" stroke-width=".7"/><circle cx="254.5" cy="615" r="1.700" fill="#B03030" stroke="#333" stroke-width=".7"/><rect x="326" y="604" width="11" height="9" rx="1" fill="#D4D8E0" stroke="#8890A0" stroke-width=".8"/><path d="M328.5 605v7M331 605v7M333.5 605v7" stroke="#A8B0BC" stroke-width="1"/><rect x="322" y="606" width="4" height="8" fill="#F0B020" stroke="#A87810" stroke-width=".6"/><rect x="322.8" y="607" width="2.400" height="3" fill="#4A90E0"/><rect x="322" y="613" width="15" height="1.500" fill="#555"/><circle cx="325" cy="615" r="1.700" fill="#B03030" stroke="#333" stroke-width=".7"/><circle cx="334.5" cy="615" r="1.700" fill="#B03030" stroke="#333" stroke-width=".7"/><circle cx="409" cy="610" r="6" fill="#D89840"/><path d="M403 606l-1 -4l4 2zM415 606l1 -4l-4 2z" fill="#B87828"/><ellipse cx="409" cy="612.500" rx="3.500" ry="2.800" fill="#F8E8C8"/><circle cx="406.500" cy="608.500" r="1" fill="#222"/><circle cx="411.500" cy="608.500" r="1" fill="#222"/><circle cx="409" cy="611.500" r="1.100" fill="#222"/><text x="482" y="615" font-family="Liberation Serif,serif" font-size="11" fill="#444">[<tspan font-style="italic" fill="#A03030">x</tspan>=]</text><path d="M579 618l5 -9a3.200 3.200 0 1 0 -5.500 -2.500" fill="none" stroke="#E03030" stroke-width="2.600" stroke-linecap="round"/><path d="M579 618l5 -9a3.200 3.200 0 1 0 -5.500 -2.500" fill="none" stroke="#FFF" stroke-width="2.600" stroke-dasharray="1.500 2.500"/></svg>
<div class="a" style="left:0px;top:622px;width:946px;height:202px;background:#FFF8F0"></div>
<div class="a" style="left:0px;top:622px;width:946px;height:1px;background:#7F9DB9"></div>
<div class="a" style="left:945px;top:622px;width:1px;height:202px;background:#7F9DB9"></div>
<div class="a" style="left:0px;top:623px;width:928px;height:14px;background:#C0C0C0"></div>
<div class="a" style="left:0px;top:636px;width:928px;height:1px;background:#808080"></div>
<div class="a" style="left:927px;top:623px;width:1px;height:14px;background:#808080"></div>
<div class="a" style="left:54px;top:623px;width:2px;height:14px;background:#808080"></div>
<div class="a" style="left:54px;top:637px;width:1px;height:187px;background:#808080"></div>
<div class="a" style="left:391px;top:623px;width:2px;height:14px;background:#808080"></div>
<div class="a" style="left:392px;top:637px;width:1px;height:187px;background:#808080"></div>
<div class="a" style="left:510px;top:623px;width:2px;height:14px;background:#808080"></div>
<div class="a" style="left:511px;top:637px;width:1px;height:187px;background:#808080"></div>
<div class="a" style="left:139px;top:637px;width:1px;height:187px;background:#808080"></div>
<div class="a" style="left:223px;top:637px;width:1px;height:187px;background:#808080"></div>
<div class="a" style="left:307px;top:637px;width:1px;height:187px;background:#808080"></div>
<div class="a ui" style="left:-5px;top:623px;line-height:14px;font-size:10.500px">地址</div>
<div class="a ui" style="left:60px;top:623px;line-height:14px;font-size:10.500px">十六进制</div>
<div class="a m" style="left:397px;top:625px">ASCII</div>
<div class="a" style="left:55px;top:638px;width:21px;height:11px;background:#C0C0C0"></div>
<div class="a m" style="left:0;top:638px;width:928px;height:186px;overflow:hidden"><div class="r" style="left:-4px;top:0px">7C920000</div><div class="r" style="left:60px;top:0px"><span style="color:#800080;">4D</span> <span style="color:#800080;">5A</span> <span style="color:#000000;">90</span> <span style="color:#008000;">00</span></div><div class="r" style="left:144px;top:0px"><span style="color:#000000;">03</span> <span style="color:#008000;">00</span> <span style="color:#008000;">00</span> <span style="color:#008000;">00</span></div><div class="r" style="left:228px;top:0px"><span style="color:#000000;">04</span> <span style="color:#008000;">00</span> <span style="color:#008000;">00</span> <span style="color:#008000;">00</span></div><div class="r" style="left:312px;top:0px"><span style="color:#800000;">FF</span> <span style="color:#800000;">FF</span> <span style="color:#008000;">00</span> <span style="color:#008000;">00</span></div><div class="r" style="left:396px;top:0px"><span style="color:#800080;background:#C0C0C0;;width:7px;letter-spacing:0">M</span><span style="color:#800080;;width:7px;letter-spacing:0">Z</span><span style="color:#000000;;width:7px;letter-spacing:0">.</span><span style="color:#008000;;width:7px;letter-spacing:0">.</span><span style="color:#000000;;width:7px;letter-spacing:0">.</span><span style="color:#008000;;width:7px;letter-spacing:0">.</span><span style="color:#008000;;width:7px;letter-spacing:0">.</span><span style="color:#008000;;width:7px;letter-spacing:0">.</span><span style="color:#000000;;width:7px;letter-spacing:0">.</span><span style="color:#008000;;width:7px;letter-spacing:0">.</span><span style="color:#008000;;width:7px;letter-spacing:0">.</span><span style="color:#008000;;width:7px;letter-spacing:0">.</span><span style="color:#800000;;width:7px;letter-spacing:0">ÿ</span><span style="color:#800000;;width:7px;letter-spacing:0">ÿ</span><span style="color:#008000;;width:7px;letter-spacing:0">.</span><span style="color:#008000;;width:7px;letter-spacing:0">.</span></div><div class="r" style="left:-4px;top:11px">7C920010</div><div class="r" style="left:60px;top:11px"><span style="color:#000000;">B8</span> <span style="color:#008000;">00</span> <span style="color:#008000;">00</span> <span style="color:#008000;">00</span></div><div class="r" style="left:144px;top:11px"><span style="color:#008000;">00</span> <span style="color:#008000;">00</span> <span style="color:#008000;">00</span> <span style="color:#008000;">00</span></div><div class="r" style="left:228px;top:11px"><span style="color:#800080;">40</span> <span style="color:#008000;">00</span> <span style="color:#008000;">00</span> <span style="color:#008000;">00</span></div><div class="r" style="left:312px;top:11px"><span style="color:#008000;">00</span> <span style="color:#008000;">00</span> <span style="color:#008000;">00</span> <span style="color:#008000;">00</span></div><div class="r" style="left:396px;top:11px"><span style="color:#000000;;width:7px;letter-spacing:0">¸</span><span style="color:#008000;;width:7px;letter-spacing:0">.</span><span style="color:#008000;;width:7px;letter-spacing:0">.</span><span style="color:#008000;;width:7px;letter-spacing:0">.</span><span style="color:#008000;;width:7px;letter-spacing:0">.</span><span style="color:#008000;;width:7px;letter-spacing:0">.</span><span style="color:#008000;;width:7px;letter-spacing:0">.</span><span style="color:#008000;;width:7px;letter-spacing:0">.</span><span style="color:#800080;;width:7px;letter-spacing:0">@</span><span style="color:#008000;;width:7px;letter-spacing:0">.</span><span style="color:#008000;;width:7px;letter-spacing:0">.</span><span style="color:#008000;;width:7px;letter-spacing:0">.</span><span style="color:#008000;;width:7px;letter-spacing:0">.</span><span style="color:#008000;;width:7px;letter-spacing:0">.</span><span style="color:#008000;;width:7px;letter-spacing:0">.</span><span style="color:#008000;;width:7px;letter-spacing:0">.</span></div><div class="r" style="left:-4px;top:22px">7C920020</div><div class="r" style="left:60px;top:22px"><span style="color:#008000;">00</span> <span style="color:#008000;">00</span> <span style="color:#008000;">00</span> <span style="color:#008000;">00</span></div><div class="r" style="left:144px;top:22px"><span style="color:#008000;">00</span> <span style="color:#008000;">00</span> <span style="color:#008000;">00</span> <span style="color:#008000;">00</span></div><div class="r" style="left:228px;top:22px"><span style="color:#008000;">00</span> <span style="color:#008000;">00</span> <span style="color:#008000;">00</span> <span style="color:#008000;">00</span></div><div class="r" style="left:312px;top:22px"><span style="color:#008000;">00</span> <span style="color:#008000;">00</span> <span style="color:#008000;">00</span> <span style="color:#008000;">00</span></div><div class="r" style="left:396px;top:22px"><span style="color:#008000;;width:7px;letter-spacing:0">.</span><span style="color:#008000;;width:7px;letter-spacing:0">.</span><span style="color:#008000;;width:7px;letter-spacing:0">.</span><span style="color:#008000;;width:7px;letter-spacing:0">.</span><span style="color:#008000;;width:7px;letter-spacing:0">.</span><span style="color:#008000;;width:7px;letter-spacing:0">.</span><span style="color:#008000;;width:7px;letter-spacing:0">.</span><span style="color:#008000;;width:7px;letter-spacing:0">.</span><span style="color:#008000;;width:7px;letter-spacing:0">.</span><span style="color:#008000;;width:7px;letter-spacing:0">.</span><span style="color:#008000;;width:7px;letter-spacing:0">.</span><span style="color:#008000;;width:7px;letter-spacing:0">.</span><span style="color:#008000;;width:7px;letter-spacing:0">.</span><span style="color:#008000;;width:7px;letter-spacing:0">.</span><span style="color:#008000;;width:7px;letter-spacing:0">.</span><span style="color:#008000;;width:7px;letter-spacing:0">.</span></div><div class="r" style="left:-4px;top:33px">7C920030</div><div class="r" style="left:60px;top:33px"><span style="color:#008000;">00</span> <span style="color:#008000;">00</span> <span style="color:#008000;">00</span> <span style="color:#008000;">00</span></div><div class="r" style="left:144px;top:33px"><span style="color:#008000;">00</span> <span style="color:#008000;">00</span> <span style="color:#008000;">00</span> <span style="color:#008000;">00</span></div><div class="r" style="left:228px;top:33px"><span style="color:#008000;">00</span> <span style="color:#008000;">00</span> <span style="color:#008000;">00</span> <span style="color:#008000;">00</span></div><div class="r" style="left:312px;top:33px"><span style="color:#000000;">E0</span> <span style="color:#008000;">00</span> <span style="color:#008000;">00</span> <span style="color:#008000;">00</span></div><div class="r" style="left:396px;top:33px"><span style="color:#008000;;width:7px;letter-spacing:0">.</span><span style="color:#008000;;width:7px;letter-spacing:0">.</span><span style="color:#008000;;width:7px;letter-spacing:0">.</span><span style="color:#008000;;width:7px;letter-spacing:0">.</span><span style="color:#008000;;width:7px;letter-spacing:0">.</span><span style="color:#008000;;width:7px;letter-spacing:0">.</span><span style="color:#008000;;width:7px;letter-spacing:0">.</span><span style="color:#008000;;width:7px;letter-spacing:0">.</span><span style="color:#008000;;width:7px;letter-spacing:0">.</span><span style="color:#008000;;width:7px;letter-spacing:0">.</span><span style="color:#008000;;width:7px;letter-spacing:0">.</span><span style="color:#008000;;width:7px;letter-spacing:0">.</span><span style="color:#000000;;width:7px;letter-spacing:0">à</span><span style="color:#008000;;width:7px;letter-spacing:0">.</span><span style="color:#008000;;width:7px;letter-spacing:0">.</span><span style="color:#008000;;width:7px;letter-spacing:0">.</span></div><div class="r" style="left:-4px;top:44px">7C920040</div><div class="r" style="left:60px;top:44px"><span style="color:#000000;">0E</span> <span style="color:#000000;">1F</span> <span style="color:#000000;">BA</span> <span style="color:#000000;">0E</span></div><div class="r" style="left:144px;top:44px"><span style="color:#008000;">00</span> <span style="color:#000000;">B4</span> <span style="color:#000000;">09</span> <span style="color:#000000;">CD</span></div><div class="r" style="left:228px;top:44px"><span style="color:#800080;">21</span> <span style="color:#000000;">B8</span> <span style="color:#000000;">01</span> <span style="color:#800080;">4C</span></div><div class="r" style="left:312px;top:44px"><span style="color:#000000;">CD</span> <span style="color:#800080;">21</span> <span style="color:#800080;">54</span> <span style="color:#800080;">68</span></div><div class="r" style="left:396px;top:44px"><span style="color:#000000;;width:7px;letter-spacing:0">.</span><span style="color:#000000;;width:7px;letter-spacing:0">.</span><span style="color:#000000;;width:7px;letter-spacing:0">º</span><span style="color:#000000;;width:7px;letter-spacing:0">.</span><span style="color:#008000;;width:7px;letter-spacing:0">.</span><span style="color:#000000;;width:7px;letter-spacing:0">´</span><span style="color:#000000;;width:7px;letter-spacing:0">.</span><span style="color:#000000;;width:7px;letter-spacing:0">Í</span><span style="color:#800080;;width:7px;letter-spacing:0">!</span><span style="color:#000000;;width:7px;letter-spacing:0">¸</span><span style="color:#000000;;width:7px;letter-spacing:0">.</span><span style="color:#800080;;width:7px;letter-spacing:0">L</span><span style="color:#000000;;width:7px;letter-spacing:0">Í</span><span style="color:#800080;;width:7px;letter-spacing:0">!</span><span style="color:#800080;;width:7px;letter-spacing:0">T</span><span style="color:#800080;;width:7px;letter-spacing:0">h</span></div><div class="r" style="left:-4px;top:55px">7C920050</div><div class="r" style="left:60px;top:55px"><span style="color:#800080;">69</span> <span style="color:#800080;">73</span> <span style="color:#800080;">20</span> <span style="color:#800080;">70</span></div><div class="r" style="left:144px;top:55px"><span style="color:#800080;">72</span> <span style="color:#800080;">6F</span> <span style="color:#800080;">67</span> <span style="color:#800080;">72</span></div><div class="r" style="left:228px;top:55px"><span style="color:#800080;">61</span> <span style="color:#800080;">6D</span> <span style="color:#800080;">20</span> <span style="color:#800080;">63</span></div><div class="r" style="left:312px;top:55px"><span style="color:#800080;">61</span> <span style="color:#800080;">6E</span> <span style="color:#800080;">6E</span> <span style="color:#800080;">6F</span></div><div class="r" style="left:396px;top:55px"><span style="color:#800080;;width:7px;letter-spacing:0">i</span><span style="color:#800080;;width:7px;letter-spacing:0">s</span><span style="color:#800080;;width:7px;letter-spacing:0"> </span><span style="color:#800080;;width:7px;letter-spacing:0">p</span><span style="color:#800080;;width:7px;letter-spacing:0">r</span><span style="color:#800080;;width:7px;letter-spacing:0">o</span><span style="color:#800080;;width:7px;letter-spacing:0">g</span><span style="color:#800080;;width:7px;letter-spacing:0">r</span><span style="color:#800080;;width:7px;letter-spacing:0">a</span><span style="color:#800080;;width:7px;letter-spacing:0">m</span><span style="color:#800080;;width:7px;letter-spacing:0"> </span><span style="color:#800080;;width:7px;letter-spacing:0">c</span><span style="color:#800080;;width:7px;letter-spacing:0">a</span><span style="color:#800080;;width:7px;letter-spacing:0">n</span><span style="color:#800080;;width:7px;letter-spacing:0">n</span><span style="color:#800080;;width:7px;letter-spacing:0">o</span></div><div class="r" style="left:-4px;top:66px">7C920060</div><div class="r" style="left:60px;top:66px"><span style="color:#800080;">74</span> <span style="color:#800080;">20</span> <span style="color:#800080;">62</span> <span style="color:#800080;">65</span></div><div class="r" style="left:144px;top:66px"><span style="color:#800080;">20</span> <span style="color:#800080;">72</span> <span style="color:#800080;">75</span> <span style="color:#800080;">6E</span></div><div class="r" style="left:228px;top:66px"><span style="color:#800080;">20</span> <span style="color:#800080;">69</span> <span style="color:#800080;">6E</span> <span style="color:#800080;">20</span></div><div class="r" style="left:312px;top:66px"><span style="color:#800080;">44</span> <span style="color:#800080;">4F</span> <span style="color:#800080;">53</span> <span style="color:#800080;">20</span></div><div class="r" style="left:396px;top:66px"><span style="color:#800080;;width:7px;letter-spacing:0">t</span><span style="color:#800080;;width:7px;letter-spacing:0"> </span><span style="color:#800080;;width:7px;letter-spacing:0">b</span><span style="color:#800080;;width:7px;letter-spacing:0">e</span><span style="color:#800080;;width:7px;letter-spacing:0"> </span><span style="color:#800080;;width:7px;letter-spacing:0">r</span><span style="color:#800080;;width:7px;letter-spacing:0">u</span><span style="color:#800080;;width:7px;letter-spacing:0">n</span><span style="color:#800080;;width:7px;letter-spacing:0"> </span><span style="color:#800080;;width:7px;letter-spacing:0">i</span><span style="color:#800080;;width:7px;letter-spacing:0">n</span><span style="color:#800080;;width:7px;letter-spacing:0"> </span><span style="color:#800080;;width:7px;letter-spacing:0">D</span><span style="color:#800080;;width:7px;letter-spacing:0">O</span><span style="color:#800080;;width:7px;letter-spacing:0">S</span><span style="color:#800080;;width:7px;letter-spacing:0"> </span></div><div class="r" style="left:-4px;top:77px">7C920070</div><div class="r" style="left:60px;top:77px"><span style="color:#800080;">6D</span> <span style="color:#800080;">6F</span> <span style="color:#800080;">64</span> <span style="color:#800080;">65</span></div><div class="r" style="left:144px;top:77px"><span style="color:#800080;">2E</span> <span style="color:#000000;">0D</span> <span style="color:#000000;">0D</span> <span style="color:#000000;">0A</span></div><div class="r" style="left:228px;top:77px"><span style="color:#800080;">24</span> <span style="color:#008000;">00</span> <span style="color:#008000;">00</span> <span style="color:#008000;">00</span></div><div class="r" style="left:312px;top:77px"><span style="color:#008000;">00</span> <span style="color:#008000;">00</span> <span style="color:#008000;">00</span> <span style="color:#008000;">00</span></div><div class="r" style="left:396px;top:77px"><span style="color:#800080;;width:7px;letter-spacing:0">m</span><span style="color:#800080;;width:7px;letter-spacing:0">o</span><span style="color:#800080;;width:7px;letter-spacing:0">d</span><span style="color:#800080;;width:7px;letter-spacing:0">e</span><span style="color:#800080;;width:7px;letter-spacing:0">.</span><span style="color:#000000;;width:7px;letter-spacing:0">.</span><span style="color:#000000;;width:7px;letter-spacing:0">.</span><span style="color:#000000;;width:7px;letter-spacing:0">.</span><span style="color:#800080;;width:7px;letter-spacing:0">$</span><span style="color:#008000;;width:7px;letter-spacing:0">.</span><span style="color:#008000;;width:7px;letter-spacing:0">.</span><span style="color:#008000;;width:7px;letter-spacing:0">.</span><span style="color:#008000;;width:7px;letter-spacing:0">.</span><span style="color:#008000;;width:7px;letter-spacing:0">.</span><span style="color:#008000;;width:7px;letter-spacing:0">.</span><span style="color:#008000;;width:7px;letter-spacing:0">.</span></div><div class="r" style="left:-4px;top:88px">7C920080</div><div class="r" style="left:60px;top:88px"><span style="color:#000000;">08</span> <span style="color:#800080;">40</span> <span style="color:#800080;">63</span> <span style="color:#000000;">FE</span></div><div class="r" style="left:144px;top:88px"><span style="color:#800080;">4C</span> <span style="color:#800080;">21</span> <span style="color:#000000;">0D</span> <span style="color:#000000;">AD</span></div><div class="r" style="left:228px;top:88px"><span style="color:#800080;">4C</span> <span style="color:#800080;">21</span> <span style="color:#000000;">0D</span> <span style="color:#000000;">AD</span></div><div class="r" style="left:312px;top:88px"><span style="color:#800080;">4C</span> <span style="color:#800080;">21</span> <span style="color:#000000;">0D</span> <span style="color:#000000;">AD</span></div><div class="r" style="left:396px;top:88px"><span style="color:#000000;;width:7px;letter-spacing:0">.</span><span style="color:#800080;;width:7px;letter-spacing:0">@</span><span style="color:#800080;;width:7px;letter-spacing:0">c</span><span style="color:#000000;;width:7px;letter-spacing:0">þ</span><span style="color:#800080;;width:7px;letter-spacing:0">L</span><span style="color:#800080;;width:7px;letter-spacing:0">!</span><span style="color:#000000;;width:7px;letter-spacing:0">.</span><span style="color:#000000;;width:7px;letter-spacing:0">.</span><span style="color:#800080;;width:7px;letter-spacing:0">L</span><span style="color:#800080;;width:7px;letter-spacing:0">!</span><span style="color:#000000;;width:7px;letter-spacing:0">.</span><span style="color:#000000;;width:7px;letter-spacing:0">.</span><span style="color:#800080;;width:7px;letter-spacing:0">L</span><span style="color:#800080;;width:7px;letter-spacing:0">!</span><span style="color:#000000;;width:7px;letter-spacing:0">.</span><span style="color:#000000;;width:7px;letter-spacing:0">.</span></div><div class="r" style="left:-4px;top:99px">7C920090</div><div class="r" style="left:60px;top:99px"><span style="color:#000000;">8F</span> <span style="color:#800080;">2E</span> <span style="color:#800080;">51</span> <span style="color:#000000;">AD</span></div><div class="r" style="left:144px;top:99px"><span style="color:#800080;">4D</span> <span style="color:#800080;">21</span> <span style="color:#000000;">0D</span> <span style="color:#000000;">AD</span></div><div class="r" style="left:228px;top:99px"><span style="color:#000000;">8F</span> <span style="color:#800080;">2E</span> <span style="color:#800080;">53</span> <span style="color:#000000;">AD</span></div><div class="r" style="left:312px;top:99px"><span style="color:#800080;">4D</span> <span style="color:#800080;">21</span> <span style="color:#000000;">0D</span> <span style="color:#000000;">AD</span></div><div class="r" style="left:396px;top:99px"><span style="color:#000000;;width:7px;letter-spacing:0">.</span><span style="color:#800080;;width:7px;letter-spacing:0">.</span><span style="color:#800080;;width:7px;letter-spacing:0">Q</span><span style="color:#000000;;width:7px;letter-spacing:0">.</span><span style="color:#800080;;width:7px;letter-spacing:0">M</span><span style="color:#800080;;width:7px;letter-spacing:0">!</span><span style="color:#000000;;width:7px;letter-spacing:0">.</span><span style="color:#000000;;width:7px;letter-spacing:0">.</span><span style="color:#000000;;width:7px;letter-spacing:0">.</span><span style="color:#800080;;width:7px;letter-spacing:0">.</span><span style="color:#800080;;width:7px;letter-spacing:0">S</span><span style="color:#000000;;width:7px;letter-spacing:0">.</span><span style="color:#800080;;width:7px;letter-spacing:0">M</span><span style="color:#800080;;width:7px;letter-spacing:0">!</span><span style="color:#000000;;width:7px;letter-spacing:0">.</span><span style="color:#000000;;width:7px;letter-spacing:0">.</span></div><div class="r" style="left:-4px;top:110px">7C9200A0</div><div class="r" style="left:60px;top:110px"><span style="color:#000000;">8F</span> <span style="color:#800080;">2E</span> <span style="color:#000000;">02</span> <span style="color:#000000;">AD</span></div><div class="r" style="left:144px;top:110px"><span style="color:#000000;">0C</span> <span style="color:#800080;">21</span> <span style="color:#000000;">0D</span> <span style="color:#000000;">AD</span></div><div class="r" style="left:228px;top:110px"><span style="color:#000000;">8F</span> <span style="color:#800080;">2E</span> <span style="color:#800080;">6D</span> <span style="color:#000000;">AD</span></div><div class="r" style="left:312px;top:110px"><span style="color:#800080;">4F</span> <span style="color:#800080;">21</span> <span style="color:#000000;">0D</span> <span style="color:#000000;">AD</span></div><div class="r" style="left:396px;top:110px"><span style="color:#000000;;width:7px;letter-spacing:0">.</span><span style="color:#800080;;width:7px;letter-spacing:0">.</span><span style="color:#000000;;width:7px;letter-spacing:0">.</span><span style="color:#000000;;width:7px;letter-spacing:0">.</span><span style="color:#000000;;width:7px;letter-spacing:0">.</span><span style="color:#800080;;width:7px;letter-spacing:0">!</span><span style="color:#000000;;width:7px;letter-spacing:0">.</span><span style="color:#000000;;width:7px;letter-spacing:0">.</span><span style="color:#000000;;width:7px;letter-spacing:0">.</span><span style="color:#800080;;width:7px;letter-spacing:0">.</span><span style="color:#800080;;width:7px;letter-spacing:0">m</span><span style="color:#000000;;width:7px;letter-spacing:0">.</span><span style="color:#800080;;width:7px;letter-spacing:0">O</span><span style="color:#800080;;width:7px;letter-spacing:0">!</span><span style="color:#000000;;width:7px;letter-spacing:0">.</span><span style="color:#000000;;width:7px;letter-spacing:0">.</span></div><div class="r" style="left:-4px;top:121px">7C9200B0</div><div class="r" style="left:60px;top:121px"><span style="color:#000000;">8F</span> <span style="color:#800080;">2E</span> <span style="color:#800080;">52</span> <span style="color:#000000;">AD</span></div><div class="r" style="left:144px;top:121px"><span style="color:#000000;">9D</span> <span style="color:#800080;">21</span> <span style="color:#000000;">0D</span> <span style="color:#000000;">AD</span></div><div class="r" style="left:228px;top:121px"><span style="color:#000000;">8F</span> <span style="color:#800080;">2E</span> <span style="color:#800080;">57</span> <span style="color:#000000;">AD</span></div><div class="r" style="left:312px;top:121px"><span style="color:#800080;">4D</span> <span style="color:#800080;">21</span> <span style="color:#000000;">0D</span> <span style="color:#000000;">AD</span></div><div class="r" style="left:396px;top:121px"><span style="color:#000000;;width:7px;letter-spacing:0">.</span><span style="color:#800080;;width:7px;letter-spacing:0">.</span><span style="color:#800080;;width:7px;letter-spacing:0">R</span><span style="color:#000000;;width:7px;letter-spacing:0">.</span><span style="color:#000000;;width:7px;letter-spacing:0">.</span><span style="color:#800080;;width:7px;letter-spacing:0">!</span><span style="color:#000000;;width:7px;letter-spacing:0">.</span><span style="color:#000000;;width:7px;letter-spacing:0">.</span><span style="color:#000000;;width:7px;letter-spacing:0">.</span><span style="color:#800080;;width:7px;letter-spacing:0">.</span><span style="color:#800080;;width:7px;letter-spacing:0">W</span><span style="color:#000000;;width:7px;letter-spacing:0">.</span><span style="color:#800080;;width:7px;letter-spacing:0">M</span><span style="color:#800080;;width:7px;letter-spacing:0">!</span><span style="color:#000000;;width:7px;letter-spacing:0">.</span><span style="color:#000000;;width:7px;letter-spacing:0">.</span></div><div class="r" style="left:-4px;top:132px">7C9200C0</div><div class="r" style="left:60px;top:132px"><span style="color:#800080;">52</span> <span style="color:#800080;">69</span> <span style="color:#800080;">63</span> <span style="color:#800080;">68</span></div><div class="r" style="left:144px;top:132px"><span style="color:#800080;">4C</span> <span style="color:#800080;">21</span> <span style="color:#000000;">0D</span> <span style="color:#000000;">AD</span></div><div class="r" style="left:228px;top:132px"><span style="color:#008000;">00</span> <span style="color:#008000;">00</span> <span style="color:#008000;">00</span> <span style="color:#008000;">00</span></div><div class="r" style="left:312px;top:132px"><span style="color:#008000;">00</span> <span style="color:#008000;">00</span> <span style="color:#008000;">00</span> <span style="color:#008000;">00</span></div><div class="r" style="left:396px;top:132px"><span style="color:#800080;;width:7px;letter-spacing:0">R</span><span style="color:#800080;;width:7px;letter-spacing:0">i</span><span style="color:#800080;;width:7px;letter-spacing:0">c</span><span style="color:#800080;;width:7px;letter-spacing:0">h</span><span style="color:#800080;;width:7px;letter-spacing:0">L</span><span style="color:#800080;;width:7px;letter-spacing:0">!</span><span style="color:#000000;;width:7px;letter-spacing:0">.</span><span style="color:#000000;;width:7px;letter-spacing:0">.</span><span style="color:#008000;;width:7px;letter-spacing:0">.</span><span style="color:#008000;;width:7px;letter-spacing:0">.</span><span style="color:#008000;;width:7px;letter-spacing:0">.</span><span style="color:#008000;;width:7px;letter-spacing:0">.</span><span style="color:#008000;;width:7px;letter-spacing:0">.</span><span style="color:#008000;;width:7px;letter-spacing:0">.</span><span style="color:#008000;;width:7px;letter-spacing:0">.</span><span style="color:#008000;;width:7px;letter-spacing:0">.</span></div><div class="r" style="left:-4px;top:143px">7C9200D0</div><div class="r" style="left:60px;top:143px"><span style="color:#008000;">00</span> <span style="color:#008000;">00</span> <span style="color:#008000;">00</span> <span style="color:#008000;">00</span></div><div class="r" style="left:144px;top:143px"><span style="color:#008000;">00</span> <span style="color:#008000;">00</span> <span style="color:#008000;">00</span> <span style="color:#008000;">00</span></div><div class="r" style="left:228px;top:143px"><span style="color:#008000;">00</span> <span style="color:#008000;">00</span> <span style="color:#008000;">00</span> <span style="color:#008000;">00</span></div><div class="r" style="left:312px;top:143px"><span style="color:#008000;">00</span> <span style="color:#008000;">00</span> <span style="color:#008000;">00</span> <span style="color:#008000;">00</span></div><div class="r" style="left:396px;top:143px"><span style="color:#008000;;width:7px;letter-spacing:0">.</span><span style="color:#008000;;width:7px;letter-spacing:0">.</span><span style="color:#008000;;width:7px;letter-spacing:0">.</span><span style="color:#008000;;width:7px;letter-spacing:0">.</span><span style="color:#008000;;width:7px;letter-spacing:0">.</span><span style="color:#008000;;width:7px;letter-spacing:0">.</span><span style="color:#008000;;width:7px;letter-spacing:0">.</span><span style="color:#008000;;width:7px;letter-spacing:0">.</span><span style="color:#008000;;width:7px;letter-spacing:0">.</span><span style="color:#008000;;width:7px;letter-spacing:0">.</span><span style="color:#008000;;width:7px;letter-spacing:0">.</span><span style="color:#008000;;width:7px;letter-spacing:0">.</span><span style="color:#008000;;width:7px;letter-spacing:0">.</span><span style="color:#008000;;width:7px;letter-spacing:0">.</span><span style="color:#008000;;width:7px;letter-spacing:0">.</span><span style="color:#008000;;width:7px;letter-spacing:0">.</span></div><div class="r" style="left:-4px;top:154px">7C9200E0</div><div class="r" style="left:60px;top:154px"><span style="color:#800080;">50</span> <span style="color:#800080;">45</span> <span style="color:#008000;">00</span> <span style="color:#008000;">00</span></div><div class="r" style="left:144px;top:154px"><span style="color:#800080;">4C</span> <span style="color:#000000;">01</span> <span style="color:#000000;">04</span> <span style="color:#008000;">00</span></div><div class="r" style="left:228px;top:154px"><span style="color:#000000;">C5</span> <span style="color:#000000;">BD</span> <span style="color:#000000;">02</span> <span style="color:#800080;">48</span></div><div class="r" style="left:312px;top:154px"><span style="color:#008000;">00</span> <span style="color:#008000;">00</span> <span style="color:#008000;">00</span> <span style="color:#008000;">00</span></div><div class="r" style="left:396px;top:154px"><span style="color:#800080;;width:7px;letter-spacing:0">P</span><span style="color:#800080;;width:7px;letter-spacing:0">E</span><span style="color:#008000;;width:7px;letter-spacing:0">.</span><span style="color:#008000;;width:7px;letter-spacing:0">.</span><span style="color:#800080;;width:7px;letter-spacing:0">L</span><span style="color:#000000;;width:7px;letter-spacing:0">.</span><span style="color:#000000;;width:7px;letter-spacing:0">.</span><span style="color:#008000;;width:7px;letter-spacing:0">.</span><span style="color:#000000;;width:7px;letter-spacing:0">Å</span><span style="color:#000000;;width:7px;letter-spacing:0">½</span><span style="color:#000000;;width:7px;letter-spacing:0">.</span><span style="color:#800080;;width:7px;letter-spacing:0">H</span><span style="color:#008000;;width:7px;letter-spacing:0">.</span><span style="color:#008000;;width:7px;letter-spacing:0">.</span><span style="color:#008000;;width:7px;letter-spacing:0">.</span><span style="color:#008000;;width:7px;letter-spacing:0">.</span></div><div class="r" style="left:-4px;top:165px">7C9200F0</div><div class="r" style="left:60px;top:165px"><span style="color:#008000;">00</span> <span style="color:#008000;">00</span> <span style="color:#008000;">00</span> <span style="color:#008000;">00</span></div><div class="r" style="left:144px;top:165px"><span style="color:#000000;">E0</span> <span style="color:#008000;">00</span> <span style="color:#000000;">0E</span> <span style="color:#800080;">21</span></div><div class="r" style="left:228px;top:165px"><span style="color:#000000;">0B</span> <span style="color:#000000;">01</span> <span style="color:#000000;">07</span> <span style="color:#000000;">0A</span></div><div class="r" style="left:312px;top:165px"><span style="color:#008000;">00</span> <span style="color:#000000;">A0</span> <span style="color:#000000;">07</span> <span style="color:#008000;">00</span></div><div class="r" style="left:396px;top:165px"><span style="color:#008000;;width:7px;letter-spacing:0">.</span><span style="color:#008000;;width:7px;letter-spacing:0">.</span><span style="color:#008000;;width:7px;letter-spacing:0">.</span><span style="color:#008000;;width:7px;letter-spacing:0">.</span><span style="color:#000000;;width:7px;letter-spacing:0">à</span><span style="color:#008000;;width:7px;letter-spacing:0">.</span><span style="color:#000000;;width:7px;letter-spacing:0">.</span><span style="color:#800080;;width:7px;letter-spacing:0">!</span><span style="color:#000000;;width:7px;letter-spacing:0">.</span><span style="color:#000000;;width:7px;letter-spacing:0">.</span><span style="color:#000000;;width:7px;letter-spacing:0">.</span><span style="color:#000000;;width:7px;letter-spacing:0">.</span><span style="color:#008000;;width:7px;letter-spacing:0">.</span><span style="color:#000000;;width:7px;letter-spacing:0"> </span><span style="color:#000000;;width:7px;letter-spacing:0">.</span><span style="color:#008000;;width:7px;letter-spacing:0">.</span></div><div class="r" style="left:-4px;top:176px">7C920100</div><div class="r" style="left:60px;top:176px"><span style="color:#008000;">00</span> <span style="color:#800080;">5A</span> <span style="color:#000000;">01</span> <span style="color:#008000;">00</span></div><div class="r" style="left:144px;top:176px"><span style="color:#008000;">00</span> <span style="color:#008000;">00</span> <span style="color:#008000;">00</span> <span style="color:#008000;">00</span></div><div class="r" style="left:228px;top:176px"><span style="color:#800080;">28</span> <span style="color:#800080;">2C</span> <span style="color:#000000;">01</span> <span style="color:#008000;">00</span></div><div class="r" style="left:312px;top:176px"><span style="color:#008000;">00</span> <span style="color:#000000;">10</span> <span style="color:#008000;">00</span> <span style="color:#008000;">00</span></div><div class="r" style="left:396px;top:176px"><span style="color:#008000;;width:7px;letter-spacing:0">.</span><span style="color:#800080;;width:7px;letter-spacing:0">Z</span><span style="color:#000000;;width:7px;letter-spacing:0">.</span><span style="color:#008000;;width:7px;letter-spacing:0">.</span><span style="color:#008000;;width:7px;letter-spacing:0">.</span><span style="color:#008000;;width:7px;letter-spacing:0">.</span><span style="color:#008000;;width:7px;letter-spacing:0">.</span><span style="color:#008000;;width:7px;letter-spacing:0">.</span><span style="color:#800080;;width:7px;letter-spacing:0">(</span><span style="color:#800080;;width:7px;letter-spacing:0">,</span><span style="color:#000000;;width:7px;letter-spacing:0">.</span><span style="color:#008000;;width:7px;letter-spacing:0">.</span><span style="color:#008000;;width:7px;letter-spacing:0">.</span><span style="color:#000000;;width:7px;letter-spacing:0">.</span><span style="color:#008000;;width:7px;letter-spacing:0">.</span><span style="color:#008000;;width:7px;letter-spacing:0">.</span></div></div>
<div class="a" style="left:144px;top:725px;width:78px;height:1px;background:#000080"></div>
<div class="a" style="left:228px;top:813px;width:78px;height:1px;background:#000080"></div>
<div class="a" style="left:928px;top:623px;width:17px;height:201px;background:linear-gradient(to right,#F3F1EC,#FEFEFB 60%)"></div>
<div class="btn" style="left:929px;top:623px;width:15px;height:16px;"></div>
<div class="btn" style="left:929px;top:806px;width:15px;height:17px;"></div>
<div class="btn" style="left:929px;top:640px;width:15px;height:9px;"></div>
<svg class="a" style="left:930px;top:624px;" width="14" height="14" viewBox="0 0 14 14"><path d="M3 8.500l3.500 -3.500l3.500 3.500" fill="none" stroke="#4D6185" stroke-width="2"/></svg>
<svg class="a" style="left:930px;top:808px;" width="14" height="14" viewBox="0 0 14 14"><path d="M3 5.500l3.500 3.500l3.500 -3.500" fill="none" stroke="#4D6185" stroke-width="2"/></svg>
<div class="a" style="left:0px;top:824px;width:946px;height:1px;background:#7F9DB9"></div>
<div class="a" style="left:947px;top:598px;width:620px;height:226px;background:#FFF8F0;border:1px solid #000"></div>
<div class="a" style="left:947px;top:824px;width:620px;height:1px;background:#8A8A8A"></div>
<div class="a" style="left:948px;top:687px;width:606px;height:11px;background:#C0C0C0"></div>
<div class="a" style="left:1090px;top:599px;width:1px;height:207px;background:#808080"></div>
<div class="a" style="left:1156px;top:599px;width:1px;height:207px;background:#808080"></div>
<div class="a m" style="left:949px;top:599px;width:605px;height:207px;overflow:hidden"><div class="r g" style="left:3px;top:0px">$-20</div><div class="r g" style="left:66px;top:0px">00123DB0</div><div class="r" style="left:146px;top:0px">00000000</div><div class="r g" style="left:3px;top:11px">$-1C</div><div class="r g" style="left:66px;top:11px">00123DB4</div><div class="r" style="left:146px;top:11px">00000000</div><div class="r g" style="left:3px;top:22px">$-18</div><div class="r g" style="left:66px;top:22px">00123DB8</div><div class="r" style="left:146px;top:22px">00000000</div><div class="r g" style="left:3px;top:33px">$-14</div><div class="r g" style="left:66px;top:33px">00123DBC</div><div class="r" style="left:146px;top:33px">0000FF35</div><div class="r g" style="left:3px;top:44px">$-10</div><div class="r g" style="left:66px;top:44px">00123DC0</div><div class="r" style="left:146px;top:44px">90909090</div><div class="r g" style="left:3px;top:55px">$-C</div><div class="r g" style="left:66px;top:55px">00123DC4</div><div class="r" style="left:146px;top:55px">90909090</div><div class="r g" style="left:3px;top:66px">$-8</div><div class="r g" style="left:66px;top:66px">00123DC8</div><div class="r" style="left:146px;top:66px">00000000</div><div class="r g" style="left:3px;top:77px">$-4</div><div class="r g" style="left:66px;top:77px">00123DCC</div><div class="r" style="left:146px;top:77px">90909090</div><div class="r" style="left:3px;top:88px">$</div><div class="r " style="left:66px;top:88px">00123DD0</div><div class="r" style="left:146px;top:88px">90909090</div><div class="r g" style="left:3px;top:99px">$+4</div><div class="r g" style="left:66px;top:99px">00123DD4</div><div class="r" style="left:149px;top:99px">7FFA4512</div><div class="r g" style="left:3px;top:110px">$+8</div><div class="r g" style="left:66px;top:110px">00123DD8</div><div class="r" style="left:149px;top:110px">90909090</div><div class="r g" style="left:3px;top:121px">$+C</div><div class="r g" style="left:66px;top:121px">00123DDC</div><div class="r" style="left:149px;top:121px">90909090</div><div class="r g" style="left:3px;top:132px">$+10</div><div class="r g" style="left:66px;top:132px">00123DE0</div><div class="r" style="left:149px;top:132px">90909090</div><div class="r g" style="left:3px;top:143px">$+14</div><div class="r g" style="left:66px;top:143px">00123DE4</div><div class="r" style="left:149px;top:143px">90909090</div><div class="r g" style="left:3px;top:154px">$+18</div><div class="r g" style="left:66px;top:154px">00123DE8</div><div class="r" style="left:149px;top:154px">00000000</div><div class="r g" style="left:3px;top:165px">$+1C</div><div class="r g" style="left:66px;top:165px">00123DEC</div><div class="r" style="left:149px;top:165px">0A6A68FC</div><div class="r g" style="left:3px;top:176px">$+20</div><div class="r g" style="left:66px;top:176px">00123DF0</div><div class="r" style="left:149px;top:176px">63681E38</div><div class="r g" style="left:3px;top:187px">$+24</div><div class="r g" style="left:66px;top:187px">00123DF4</div><div class="r" style="left:149px;top:187px">684FD189</div><div class="r g" style="left:3px;top:198px">$+28</div><div class="r g" style="left:66px;top:198px">00123DF8</div><div class="r" style="left:149px;top:198px">0C917432</div></div>
<svg class="a" style="left:963px;top:687px;" width="24" height="11" viewBox="0 0 24 11"><path d="M2 4.500h15M2 6.500h15" stroke="#000" stroke-width="1" shape-rendering="crispEdges"/><path d="M16.500 2.500l4.500 3l-4.500 3" fill="none" stroke="#000" stroke-width="1"/></svg>
<div class="a" style="left:1092px;top:698px;width:2px;height:108px;background:#000"></div>
<div class="a" style="left:1092px;top:698px;width:5px;height:1px;background:#000"></div>
<div class="a" style="left:948px;top:806px;width:606px;height:17px;background:linear-gradient(#F3F1EC,#FEFEFB 60%)"></div>
<div class="btn" style="left:948px;top:807px;width:16px;height:15px;"></div>
<div class="btn" style="left:1537px;top:807px;width:16px;height:15px;"></div>
<div class="btn" style="left:965px;top:807px;width:164px;height:15px;"></div>
<svg class="a" style="left:949px;top:808px;" width="14" height="14" viewBox="0 0 14 14"><path d="M8.500 3l-3.500 3.500l3.500 3.500" fill="none" stroke="#4D6185" stroke-width="2"/></svg>
<svg class="a" style="left:1538px;top:808px;" width="14" height="14" viewBox="0 0 14 14"><path d="M5.500 3l3.500 3.500l-3.500 3.500" fill="none" stroke="#4D6185" stroke-width="2"/></svg>
<svg class="a" style="left:1042px;top:811px;" width="10" height="7" viewBox="0 0 10 7"><path d="M1.500 0v6M3.500 0v6M5.500 0v6M7.500 0v6" stroke="#EEF4FE" stroke-width="1"/><path d="M2.500 0v6M4.500 0v6M6.500 0v6M8.500 0v6" stroke="#8CB0F8" stroke-width="1" opacity=".8"/></svg>
<div class="a" style="left:0px;top:825px;width:1554px;height:24px;background:#ECE9D8"></div>
<div class="a ui" style="left:-7px;top:829px;line-height:14px;font-size:11px">命令:</div>
<div class="a" style="left:27px;top:826px;width:1471px;height:20px;background:#FFFFFF;border:1px solid #7F9DB9"></div>
<div class="a m" style="left:31px;top:829px;line-height:14px;color:#A0A0A0"><span style="font-size:10.500px;letter-spacing:.25px">命令使用逗号分隔（像汇编语言）：</span><span style="margin-left:9px">mov eax, ebx</span></div>
<div class="a" style="left:1499px;top:826px;width:60px;height:20px;background:#FFFFFF;border:1px solid #7F9DB9"></div>
<div class="a ui" style="left:1502px;top:829px;line-height:14px">默认</div>
<div class="a" style="left:0px;top:849px;width:1554px;height:21px;background:#C0C0C0"></div>
<div class="a" style="left:0px;top:851px;width:50px;height:17px;background:#FFFF00"></div>
<div class="a ui" style="left:3px;top:852px;line-height:14px;color:#FF0000">已暂停</div>
<div class="a" style="left:56px;top:851px;width:1362px;height:17px;border:1px solid;border-color:#808080 #E8E8E8 #E8E8E8 #808080"></div>
<div class="a ui" style="left:60px;top:853px;line-height:14px"><span class="l">INT3 </span>断点于<span class="l"> mso.30E9EB85 (30E9EB85)!</span></div>
<div class="a" style="left:1424px;top:851px;width:140px;height:17px;border:1px solid;border-color:#808080 #E8E8E8 #E8E8E8 #808080"></div>
<div class="a ui" style="left:1428px;top:853px;line-height:14px">已调试时间：</div>
<div class="a" style="left:1497px;top:839px;width:60px;height:26px;background:linear-gradient(#3A78EC,#2458D4 25%,#2050C8)"></div>
<svg class="a" style="left:1497px;top:839px;" width="57" height="26" viewBox="0 0 57 26"><path d="M3.500 6v1M5.500 8v1M3.500 10v1M5.500 12v1M3.500 14v1M5.500 16v1M3.500 18v1M5.500 20v1" stroke="#1038A0" stroke-width="1.500"/><path d="M4.500 7v1M6.500 9v1M4.500 11v1M6.500 13v1M4.500 15v1M6.500 17v1M4.500 19v1" stroke="#30A0E8" stroke-width="1"/><rect x="14" y="10" width="15" height="8" rx="1" fill="#FFF" stroke="#111" stroke-width="1"/><path d="M16 12.500h11M16 15h11" stroke="#111" stroke-width="1" stroke-dasharray="1 1"/><path d="M18 10c0-4 8 0 8-3" fill="none" stroke="#111" stroke-width="1"/><path d="M36.500 6.500h12v11h-3l1 3l-4 -3h-6z" fill="#FFFFC0" stroke="#111" stroke-width="1"/><text x="42.500" y="15.500" font-family="Liberation Sans,sans-serif" font-weight="bold" font-size="10" fill="#1818A0" text-anchor="middle">?</text></svg>
<div class="a" style="left:0px;top:870px;width:1554px;height:12px;background:linear-gradient(#3168D5,#4993E6 2px,#2663E0 5px,#245DDB)"></div>
<div class="a" style="left:0px;top:870px;width:86px;height:12px;background:linear-gradient(#3C8F3C,#5EB85E 2px,#3C963C 6px);border-radius:0 8px 8px 0"></div>
<div class="a" style="left:97px;top:873px;width:158px;height:12px;background:#3C81F3;border-radius:3px 3px 0 0;border:1px solid #5C9CFF;border-bottom:none"></div>
<div class="a" style="left:258px;top:873px;width:158px;height:12px;background:#3C81F3;border-radius:3px 3px 0 0;border:1px solid #5C9CFF;border-bottom:none"></div>
<div class="a" style="left:418px;top:873px;width:158px;height:12px;background:#1E52B7;border-radius:3px 3px 0 0;border:1px solid #163C90;border-bottom:none"></div>
<div class="a" style="left:1457px;top:870px;width:100px;height:12px;background:linear-gradient(#1290E8,#0F8CEA 3px,#1098E8);border-left:1px solid #0A3C8C"></div>
<div class="a" style="left:0;top:870px;width:1554px;height:12px;overflow:hidden"><div class="a ui" style="left:32px;top:4px;color:#FFF;font-size:19px;line-height:20px;font-style:italic;text-shadow:1px 1px 1px #245020">开始</div><div class="a" style="left:106px;top:7px;width:10px;height:8px;background:#FFF;border:1px solid #335"></div><div class="a" style="left:268px;top:7px;width:10px;height:8px;background:#FFF;border:1px solid #335"></div><div class="a ui" style="left:120px;top:8px;color:#FFF;font-size:11px;line-height:12px">文档</div><div class="a ui" style="left:281px;top:8px;color:#FFF;font-size:11px;line-height:12px">Microsoft</div></div>
<svg class="a" style="left:0px;top:870px;" width="60" height="12" viewBox="0 0 60 12"><path d="M6 12c1-5 3-8 5-10" stroke="#E85020" stroke-width="3" fill="none"/><path d="M12 12c1-4 2-6 4-7" stroke="#60C030" stroke-width="3" fill="none"/></svg>
<svg class="a" style="left:1440px;top:870px;" width="114" height="12" viewBox="0 0 114 12"><circle cx="17.500" cy="15" r="8" fill="#8CCBF4" stroke="#3070C0" stroke-width="1"/><path d="M29 12v-4h5v4M48 12v-4h5v4M66 12v-4h5v4" fill="none" stroke="#E04010" stroke-width="2"/><path d="M92 12v-2M96 12v-2M100 12v-2M106 12v-2M110 12v-2" stroke="#FFF" stroke-width="2"/></svg>
<svg class="a" style="left:0px;top:0px;z-index:10;pointer-events:none" width="1554" height="882" viewBox="0 0 1554 882"><g fill="none" stroke="#FF5500" stroke-width="6.200" stroke-linecap="round" stroke-linejoin="round"><path d="M646 229.500C630 228 600 212 583 204.500C570 199 562 199.500 552 196.500C540 192 515 178 488.500 162" /><path d="M508 149C500 151 493 157 488.500 162C489 168 490 172 492.500 177.500" /><path d="M894.500 222C900 218 908 217.500 915 215C926 211 936 206.500 946 201.500C956 196.500 966 191 975 185.500C981 181.500 985 177 990 173C995 169.500 1000 167.500 1006 165C1011 163 1016 161.500 1021.500 159.500" /><path d="M1013 139.500C1016 142 1020 145 1022.500 147.500C1025 150.500 1026.500 154 1026.500 158C1027 163 1026 168 1025.800 172.500" /><path d="M819.500 631C829 635 838 639.500 848 643.500C860 648.500 873 654 887 657.500C900 660.500 912 661.500 925.500 661.700C942 662 958 659.500 973.700 660.600C987 661.500 1000 663 1012.500 666C1026 669 1039 672 1051 676.600C1058 679.500 1064 682.500 1069 686.200C1072 688.500 1074.500 691 1076 693.500" /><path d="M1066.500 672.700C1069 676.500 1071 680 1073 684.300C1074.500 688 1075.500 690.500 1076 693.500C1070 695.500 1064 696.300 1058.600 696.800C1053 697.500 1047 698.400 1041.700 699" /></g></svg>
</body></html>
